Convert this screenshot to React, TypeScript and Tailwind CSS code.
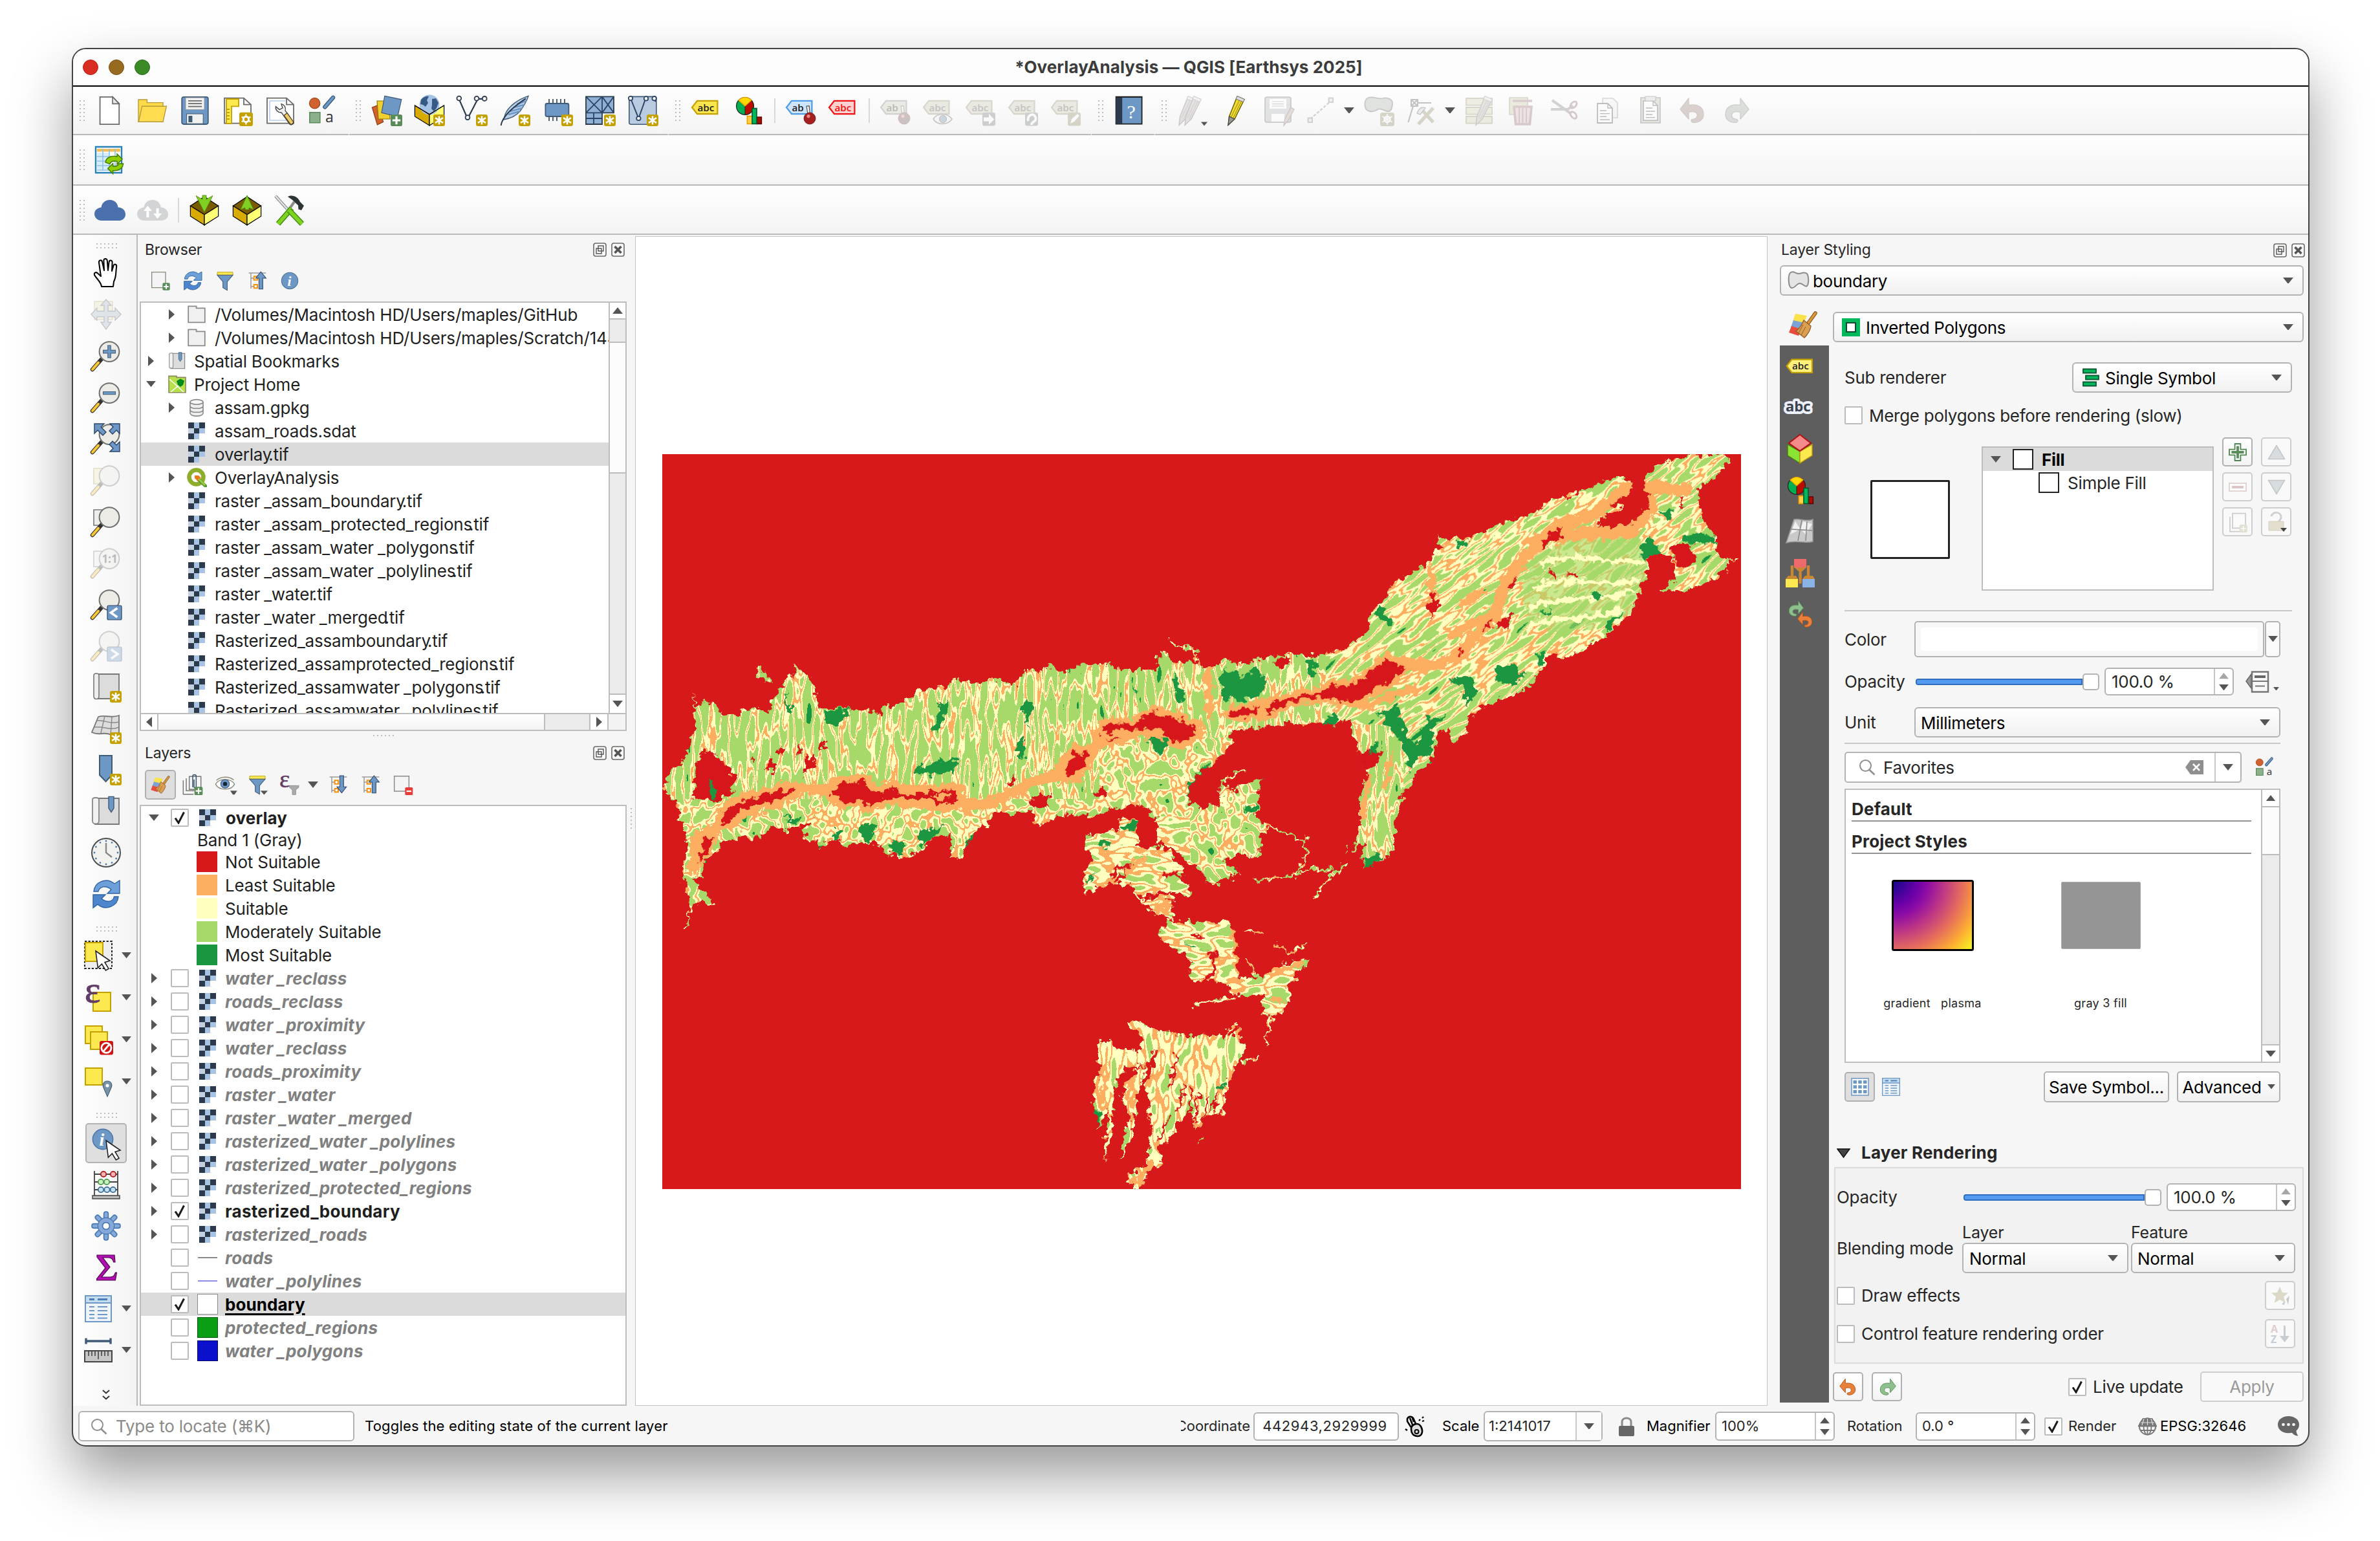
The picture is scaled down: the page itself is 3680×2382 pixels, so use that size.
import React from "react";

/* ------------------------------------------------------------------ */
/* Icon primitives (24-unit grid)                                      */
/* ------------------------------------------------------------------ */

function Ic({ s = 48, dim, children }: { s?: number; dim?: boolean; children: React.ReactNode }) {
  return (
    <svg width={s} height={s} viewBox="0 0 24 24" fill="none" className={dim ? "shrink-0 overflow-visible opacity-30" : "shrink-0 overflow-visible"}>
      {children}
    </svg>
  );
}

const BLUE = "#6d97c4";
const EDGE = "#415a75";

const Star = () => (
  <g>
    <rect x="15" y="15" width="9" height="9" rx="1.6" fill="#c4a000" />
    <path d="M19.5 16.3v6.4M16.5 17.6l6 3.8M16.5 21.4l6-3.8" stroke="#fff" strokeWidth="1.3" />
    <circle cx="19.5" cy="19.5" r="1.1" fill="#fff" />
  </g>
);
const PlusBadge = ({ x = 15, y = 15, w = 9 }) => (
  <g>
    <rect x={x} y={y} width={w} height={w} rx="1.4" fill="#5a8c5a" />
    <path d={`M${x + w / 2} ${y + 1.4}v${w - 2.8}M${x + 1.4} ${y + w / 2}h${w - 2.8}`} stroke="#fff" strokeWidth="1.6" />
  </g>
);

const NewFile = () => <Ic><path d="M4.8 1.4h9.8l5 5.2v16H4.8z" fill="#fff" stroke="#6a6a6a" strokeWidth=".9" /><path d="M14.5 1.4v5.3h5.1z" fill="#e8e8e8" stroke="#6a6a6a" strokeWidth=".8" /></Ic>;
const OpenFolder = () => <Ic><path d="M1.5 20.6V3.5h6.700v2.300h12.300v14.700z" fill="#ffda47" stroke="#b69a3b" strokeWidth=".7" /><path d="M4.300 8.600h18.900l-2.700 12H1.700z" fill="#ffdc50" stroke="#b69a3b" strokeWidth=".7" /></Ic>;
const Floppy = () => (
  <Ic>
    <path d="M3.500 1.400h17.500a1.400 1.400 0 0 1 1.400 1.400v18.300a1.400 1.400 0 0 1-1.400 1.400H3.500a1.400 1.400 0 0 1-1.400-1.400V2.800a1.400 1.400 0 0 1 1.400-1.400z" fill={BLUE} stroke={EDGE} strokeWidth=".9" />
    <path d="M5 2h14.500v9.200H5z" fill="#f1f1ef" stroke="#8a8f94" strokeWidth=".4" />
    <path d="M7 4.400h10.600M7 6.600h10.600M7 8.800h10.600" stroke="#6b6b6b" strokeWidth=".9" />
    <path d="M5.800 14.500h12.800v7.600H5.800z" fill="#f1f1ef" stroke="#3f566d" strokeWidth=".5" />
    <path d="M7.200 16h3v5h-3z" fill={EDGE} />
  </Ic>
);
const NewLayout = () => (
  <Ic>
    <path d="M2 2.300h15l5.500 5v14.500H2z" fill="#fff" stroke="#6a6a6a" strokeWidth=".9" />
    <path d="M17 2.300v5h5.500" stroke="#6a6a6a" strokeWidth=".9" />
    <path d="M3.500 3h9.500v5.700H7.500V22H3.500z" fill="#fce94f" stroke="#c4a000" strokeWidth=".9" />
    <path d="M4 11h2M4 13.500h2M4 16h2M4 18.500h2" stroke="#c4a000" strokeWidth=".9" />
    <rect x="13.500" y="13.400" width="10.500" height="10.600" rx="1.6" fill="#c4a000" />
    <circle cx="18.700" cy="18.700" r="2.100" stroke="#fff" strokeWidth="1.500" />
    <path d="M18.700 14.800v2M18.700 20.700v2M15.300 16.800l1.700.9M20.500 19.700l1.700.9M15.300 20.600l1.700-.9M20.500 17.700l1.700-.9" stroke="#fff" strokeWidth="1.100" />
  </Ic>
);
const LayoutManager = () => (
  <Ic>
    <path d="M2 2.300h15l5.500 5v14.500H2z" fill="#fff" stroke="#6a6a6a" strokeWidth=".9" />
    <path d="M4 4.500h12M4 4.500v15h16" stroke="#b9cdf0" strokeWidth=".8" />
    <path d="M17 2.300v5h5.500" stroke="#6a6a6a" strokeWidth=".9" />
    <path d="M8.700 8.800a4 4 0 0 0 4.400 4.700l6.400 9c.8 1 3.200 0 2.800-1.500L16 12a4 4 0 0 0-3-5.200l1 3.200-2.500 1.200z" fill="#f0f0f0" stroke="#4c4c4c" strokeWidth=".7" />
    <path d="M15 15.700l2.500-1.900 4.700 6.700c.7 1.300-1.700 2.700-2.500 1.600z" fill="#e9c96b" stroke="#4c3c1c" strokeWidth=".6" />
  </Ic>
);
const StyleMgr = ({ s = 48 }: { s?: number }) => (
  <Ic s={s}>
    <circle cx="5.800" cy="6.300" r="4.100" fill="#d2622d" stroke="#a0451a" strokeWidth=".6" />
    <path d="M13.700 9.200l6.300-7.300" stroke="#39597c" strokeWidth="3.200" strokeLinecap="round" />
    <path d="M13.700 9.200l6.300-7.300" stroke={BLUE} strokeWidth="1.900" strokeLinecap="round" />
    <path d="M1.900 13.400h8v8h-8z" fill="#8caf8c" stroke="#5b8a5b" strokeWidth=".8" />
    <text x="14" y="21" fontSize="11.500" fill="#333" className="font-['Open_Sans']">a</text>
  </Ic>
);
const DataSource = () => (
  <Ic>
    <path d="M.7 9.500l4.800-1.800 3.800 13-4.600 2.300z" fill="#d2622d" stroke="#8a3c14" strokeWidth=".6" />
    <path d="M4.500 4.500h9l1 14h-9z" fill="#f0cf2e" stroke="#8a7500" strokeWidth=".6" />
    <path d="M10.400.700l13 2.700-3 13.200-12.400-2.900z" fill={BLUE} stroke={EDGE} strokeWidth=".6" />
    <PlusBadge />
  </Ic>
);
const Box = ({ front = "#d9aa00", side = "#ffff75" }) => (
  <>
    <path d="M1.200 8.600L12 1.500l10.800 7.100L12 15.400z" fill="#7a5c00" stroke="#000" strokeWidth=".6" />
    <path d="M1.200 8.600L12 15.400v8L1.200 16.600z" fill={front} stroke="#000" strokeWidth=".6" />
    <path d="M22.800 8.600L12 15.400v8l10.800-6.800z" fill={side} stroke="#000" strokeWidth=".6" />
  </>
);
const GeoPackage = () => (
  <Ic>
    <path d="M.700 8L12 14.700v8.800L.700 16.500z" fill="#d9aa00" stroke="#000" strokeWidth=".6" />
    <path d="M23.300 8L12 14.700v8.800l11.300-7z" fill="#ffff75" stroke="#000" strokeWidth=".6" />
    <circle cx="12" cy="7.500" r="7.700" fill="#a5c3e4" />
    <path d="M5.500 3.500c2-2.500 5-3 6-2.500l-1.500 3 1 2-2 3-2-1.500-2-.5zM14 3l3-.5 2 3.500-1.500 4-2 2.500-2-2 .5-3z" fill="#365a85" />
    <path d="M.700 8L12 14.700 23.300 8 12 15.200z" fill="#d9aa00" stroke="#000" strokeWidth=".5" />
    <Star />
  </Ic>
);
const Shapefile = () => (
  <Ic>
    <path d="M1.700 2.700L8.500 18.200 16.500 2.800l4 .1" stroke="#2b3b4d" strokeWidth="1.100" />
    {[[1.900, 2.500], [8.500, 17.300], [15.500, 2.600], [21.600, 2.700]].map(([x, y]) => <circle key={x} cx={x} cy={y} r="1.700" fill="#fff" stroke="#2b3b4d" strokeWidth=".9" />)}
    <Star />
  </Ic>
);
const Feather = () => (
  <Ic>
    <path d="M22.500.700C14 3.500 7 9 4.700 14.500L3.300 19C9 18 13 16 16 12.500c3-4 5-7 6.500-11.800z" fill="#b7cfe8" stroke={EDGE} strokeWidth=".7" />
    <path d="M7 15l9-2.500M8.500 12.500l9.500-2.500M11 9.500l8.500-2M13.500 7l7.500-2.500" stroke={BLUE} strokeWidth="1.200" />
    <path d="M1.300 23.500C2 18 8 11 20.500 2.700" stroke="#2b3b4d" strokeWidth="1" />
    <Star />
  </Ic>
);
const Chip = () => (
  <Ic>
    <path d="M5.500 3v4M8.500 3v4M11.500 3v4M14.500 3v4M17.500 3v4M5.500 16v4M8.500 16v4M11.500 16v4" stroke="#2b3b4d" strokeWidth=".8" />
    <rect x="2.700" y="6.500" width="18" height="10" rx="1.200" fill={BLUE} stroke={EDGE} strokeWidth=".9" />
    <Star />
  </Ic>
);
const MeshNew = () => (
  <Ic>
    <path d="M1 1.200h21.500v12.500H13.500V22.500H1z" fill="#8fb0d4" stroke="#2b3b4d" strokeWidth=".9" />
    <path d="M1 13.700h12.500M13.500 1.200v12.500M1 1.200l12.500 12.500M13.500 1.200L1 13.700M13.500 1.200l9 12.500M22.500 1.200l-9 12.500M7 13.700v8.800M1 18h12.500" stroke="#2b4468" strokeWidth=".9" />
    <Star />
  </Ic>
);
const GpxNew = () => (
  <Ic>
    <rect x="1.400" y="1.200" width="21" height="21.400" rx="1.500" fill="#b9cbe0" stroke={EDGE} strokeWidth=".8" />
    <path d="M2.500 2.500L8.700 18 14 3M20 3l2 2" stroke="#2b4468" strokeWidth="1" />
    {[[2.500, 2.500], [8.700, 18], [14.500, 2.700], [20.800, 2.600]].map(([x, y]) => <circle key={x} cx={x} cy={y} r="1.600" fill="#fff" stroke="#2b4468" strokeWidth=".9" />)}
    <Star />
  </Ic>
);
const Tag = ({ fill, stroke, color, word = "abc" }: { fill: string; stroke: string; color: string; word?: string }) => (
  <>
    <path d="M5 4.400h15.700v10.200H5L1 9.500z" fill={fill} stroke={stroke} strokeWidth="1.100" />
    <text x="5.200" y="12.300" fontSize="7.600" fontWeight="600" fill={color} className="font-['Open_Sans']">{word}</text>
  </>
);
const ChartIcon = () => (
  <Ic>
    <circle cx="9" cy="8.500" r="6.700" fill="#00b050" stroke="#222" strokeWidth=".6" />
    <path d="M9 8.500V15.200a6.700 6.700 0 0 0 5-11z" fill="#bb0c00" stroke="#222" strokeWidth=".5" />
    <path d="M9 8.500L4 4a6.700 6.700 0 0 1 10 0z" fill="#ffd800" stroke="#f39c00" strokeWidth=".6" />
    <path d="M10.700 16.300h3.800v5.900h-3.800z" fill="#ffd24a" stroke="#f39c00" strokeWidth=".8" />
    <path d="M18.200 17h3.500v5.200h-3.500z" fill="#a80f00" stroke="#650000" strokeWidth=".8" />
    <path d="M14.500 10.300H18v11.900h-3.500z" fill="#00b85c" stroke="#005a2c" strokeWidth=".8" />
  </Ic>
);
const PinLabel = ({ dim }: { dim?: boolean }) => (
  <Ic dim={dim}>
    <Tag fill={dim ? "#c8c8b4" : "#cfe4ff"} stroke={dim ? "#777" : "#4d9ae8"} color="#222" word="ab" />
    <path d="M16.500 8.500l1.200 7.500 1.600-.2-.7-7.500z" fill="#eee" stroke="#555" strokeWidth=".6" />
    <circle cx="19" cy="18" r="4.500" fill={dim ? "#6b4a4a" : "#a52020"} stroke="#611" strokeWidth=".4" />
    <circle cx="18" cy="16.300" r="1.300" fill="#e88" />
  </Ic>
);
const DimLabel = ({ kind }: { kind: number }) => (
  <Ic dim>
    <Tag fill="#c8c4a8" stroke="#8a8568" color="#444" />
    {kind === 0 && <><path d="M8.500 18.500c3-5 11-5 14.500 0-3.500 5-11.500 5-14.500 0z" fill="#eee" stroke="#555" strokeWidth=".8" /><circle cx="16" cy="18.500" r="2.800" fill="#6d86a0" stroke="#333" strokeWidth=".5" /></>}
    {kind === 1 && <><rect x="13.500" y="13.500" width="10" height="10.300" rx="1.500" fill="#6c7074" /><path d="M14.500 17.200h4v-2.700l4.200 4.200-4.200 4.200v-2.700h-4z" fill="#fff" /></>}
    {kind === 2 && <><rect x="13.500" y="13.500" width="10" height="10.300" rx="1.500" fill="#6c7074" /><path d="M16 20c-1.500-4 4-7 5.500-3s-3 3-3 6" stroke="#fff" strokeWidth="1.900" /></>}
    {kind === 3 && <><rect x="13.500" y="13.500" width="10" height="10.300" rx="1.500" fill="#8a865c" /><path d="M15.500 22l1-3.500 4.500-4 1.500 1.500-4 4.500z" fill="#fff" /></>}
  </Ic>
);
const HelpBook = () => (
  <Ic>
    <path d="M1.800 1.300h20v21H1.800z" fill={BLUE} stroke="#222" strokeWidth=".9" />
    <path d="M1.800 1.300h4.800v21H1.800z" fill="#2b3b4d" />
    <path d="M2 1.500h19.800" stroke="#222" strokeWidth="1.100" />
    <text x="10.200" y="18" fontSize="15" fill="#fff" className="font-['Liberation_Serif']">?</text>
  </Ic>
);
const PencilShape = ({ fill = "#f2dc2f", dx = 0 }) => (
  <g transform={`translate(${dx} 0)`}>
    <path d="M14.500 1l5.500 2.300-7.500 15.200-5 4.700.8-6.700z" fill={fill} stroke="#6b5d00" strokeWidth=".7" />
    <path d="M17 2.200L9.500 17.500M18.500 3L11 18.500" stroke="#a89a20" strokeWidth=".6" />
    <path d="M14.500.800l5.700 2.500-1 2-5.700-2.300z" fill="#ddd" stroke="#777" strokeWidth=".5" />
    <path d="M8.300 16.500l4.200 2-5 4.700z" fill="#9a9a9a" stroke="#444" strokeWidth=".6" />
  </g>
);
const GrayPencil = ({ dx = 0 }) => (
  <g transform={`translate(${dx} 0)`}>
    <path d="M14.500 1l5.500 2.300-7.500 15.200-5 4.700.8-6.700z" fill="#bdb0ac" stroke="#666" strokeWidth=".7" />
    <path d="M17 2.200L9.500 17.500M18.500 3L11 18.500" stroke="#8a8080" strokeWidth=".6" />
    <path d="M14.500.800l5.700 2.500-1 2-5.700-2.300z" fill="#ddd" stroke="#777" strokeWidth=".5" />
  </g>
);
const Pencil = () => <Ic><PencilShape dx={-1} /></Ic>;
const Pencils = () => (
  <Ic><g opacity=".32"><GrayPencil dx={-6} /><GrayPencil dx={-1.5} /></g><path d="M18.500 20.800h5l-2.500 3z" fill="#555" /></Ic>
);
const SaveEdits = () => (
  <Ic dim>
    <rect x="2" y="1.500" width="20" height="19.500" rx="1.500" fill="#a8aeb4" stroke="#555" strokeWidth=".8" />
    <path d="M5.500 3h13v7.500h-13zM7 14.500h10v6H7z" fill="#fff" />
    <path d="M7.500 5h9M7.500 6.800h9M7.500 8.500h9" stroke="#777" strokeWidth=".6" />
    <path d="M22 9.500l2.500 1.500-4.500 8.500-3.500 4 .8-5z" fill="#b99a90" stroke="#555" strokeWidth=".6" />
  </Ic>
);
const DigitLine = () => <Ic dim><path d="M4 18.500L19.500 5" stroke="#777" strokeWidth="1.100" strokeDasharray="2.200 1.200" /><path d="M2.300 17.800h3.200v3.200H2.300zM18.300 2.300h3.200v3.200h-3.200z" fill="#ddd" stroke="#777" strokeWidth="1" /></Ic>;
const AddPolygon = () => (
  <Ic dim>
    <path d="M3 2.500C7 0 11 3.500 15 2.500s8 1 7.500 4.500-1 6-4 5.500-5-3-8-1S2 13 1.400 9 1.500 3.500 3 2.500z" fill="#a5aca5" stroke="#555" strokeWidth=".9" />
    <rect x="13" y="13.500" width="11" height="10.500" rx="1.800" fill="#8a865c" /><circle cx="18.500" cy="18.700" r="2.200" stroke="#fff" strokeWidth="1.300" /><path d="M18.500 14.500v8.400M14.700 16.500l7.600 4.400M14.700 20.900l7.600-4.400" stroke="#fff" strokeWidth=".8" />
  </Ic>
);
const VertexTool = () => (
  <Ic dim>
    <path d="M4 3.500h5v5H4zM4.500 4l4 4M8.500 4l-4 4M9 6h10.500M5.500 8.500L1.700 21" stroke="#444" strokeWidth="1" />
    <path d="M11 10l10 11M21 10L9.500 22.500" stroke="#8a865c" strokeWidth="2.600" /><path d="M8.500 14c2-5 5-5 6.500-4l-4 5z" fill="#ccc" stroke="#555" strokeWidth=".7" />
  </Ic>
);
const MultiEdit = () => (
  <Ic dim>
    {[2.500, 9.500, 16.500].map((y) => <path key={y} d={`M1.500 ${y}h20v5.300h-20z`} fill="#d4d0ac" stroke="#8a865c" strokeWidth=".9" />)}
    <GrayPencil dx={1.5} />
  </Ic>
);
const Trash = () => (
  <Ic dim><path d="M2 2h14v13H2z" fill="#c8c4a0" stroke="#8a865c" strokeWidth=".8" /><path d="M4.500 4.500h15M5.500 9h13.500l-1.300 13.500H6.800z" stroke="#90606a" strokeWidth="1.800" fill="#d4b4b8" /><path d="M9.500 10v11.500M12.200 10v11.500M15 10v11.500" stroke="#90606a" strokeWidth="1" /></Ic>
);
const Cut = () => <Ic dim><path d="M2 4l14 10M1 11h13l4-3" stroke="#777" strokeWidth="2" /><ellipse cx="18.500" cy="7.500" rx="3" ry="1.900" transform="rotate(-45 18.500 7.500)" stroke="#805a60" strokeWidth="1.400" /><ellipse cx="18.500" cy="15.500" rx="3" ry="1.900" transform="rotate(50 18.500 15.500)" stroke="#805a60" strokeWidth="1.400" /></Ic>;
const Copy = () => <Ic dim><path d="M8 2.500h8l3.500 3.500v11.500H8z" fill="#eee" stroke="#888" strokeWidth=".8" /><path d="M4 6.500h8l3.500 3.500v11.500H4z" fill="#fff" stroke="#333" strokeWidth=".9" /><path d="M12 6.500V10h3.500M6 12h5M6 14.300h7.500M6 16.600h5M6 19h7.500" stroke="#333" strokeWidth=".7" /></Ic>;
const Paste = () => <Ic dim><path d="M4.500 2h15v19.500h-15z" fill="#bbb8a8" stroke="#555" strokeWidth=".8" /><path d="M6.500 4.500h7.500l3.500 3.500v11.500h-11z" fill="#fff" stroke="#333" strokeWidth=".8" /><path d="M14 4.500V8h3.500M8.500 10h5M8.500 12.500h7M8.500 15h5M8.500 17.300h7" stroke="#333" strokeWidth=".7" /><path d="M8 1h8v3.500H8z" fill="#ccc" stroke="#555" strokeWidth=".6" /></Ic>;
const ARROW_BACK = "M2 11L8.500 2.500v5.300c7.500-1.300 11.500 2 11.500 7.200 0 4-3.500 6.300-7.500 6.200-1 0-2-.6-2-1.400 0-.9.600-1.200 1.500-1.200 2.500-.2 3.500-1.800 3.200-3.600-.4-2-2.700-2.700-6.700-1.800v5.300z";
const UndoArrow = ({ s = 48, dim, flip, color, edge }: { s?: number; dim?: boolean; flip?: boolean; color: string; edge: string }) => (
  <Ic s={s} dim={dim}>
    <g transform={flip ? "translate(24 0) scale(-1 1)" : undefined}>
      <path d={ARROW_BACK} fill={color} stroke={edge} strokeWidth=".7" strokeLinejoin="round" />
    </g>
  </Ic>
);
const TableRefresh = () => (
  <Ic>
    <path d="M1.500 2h20v20H1.500z" fill="#fff" stroke="#2a80b9" strokeWidth="1.200" />
    <path d="M2.500 3.500h18v2.200h-18z" fill="#f5bd55" />
    <path d="M2.500 6.500h10v13h-10z" fill="#d5ecf9" />
    <path d="M2.500 9.500h18M2.500 13h18M2.500 16.500h18M2.500 20h18M7 3.500v17M12 3.500v17M16.500 3.500v17" stroke="#90c0e2" strokeWidth=".8" />
    <path d="M9 14c.5-4 5-5.500 9-4.500V7.500l4 4-4 4v-2.300c-3-.5-5 .300-5.500 2z" fill="#8fce00" stroke="#3f7c00" strokeWidth=".7" />
    <path d="M22.800 15c-.5 4-4 5.800-8 5.300v2.500l-4-4 4-4v2.200c2.500.5 4.300-.700 4.500-2z" fill="#8fce00" stroke="#3f7c00" strokeWidth=".7" />
  </Ic>
);
const CloudShape = ({ color, children }: { color: string; children?: React.ReactNode }) => (
  <Ic><path d="M12 4c3.500 0 6 2.500 6.300 5.800C21.800 10 24 12.200 24 15.200S21.500 20 18.500 20h-13C2.500 20 0 17.800 0 14.900c0-2.800 2-4.800 5.300-5.200C5.700 6.300 8.500 4 12 4z" fill={color} />{children}</Ic>
);
const BoxDown = () => <Ic><Box /><path d="M5.500.800l5 2.800V.500h3v3.100l5-2.800L12 13.500z" fill="#7fd022" stroke="#4c8a10" strokeWidth=".4" /></Ic>;
const BoxUp = () => <Ic><Box /><path d="M12 .500l5 11L13.500 10v1.500h-3V10L7 11.500z" fill="#7fd022" stroke="#4c8a10" strokeWidth=".4" /></Ic>;
const ToolsIcon = () => (
  <Ic>
    <path d="M1 1l9 10" stroke="#8a8a8a" strokeWidth="2.400" /><path d="M1 1l9 10" stroke="#e6e6e6" strokeWidth="1.200" />
    <path d="M15.500 5.500L11 12" stroke="#8a8a8a" strokeWidth="2" />
    <path d="M10.500 1.500c4-2 8 .500 9.500 4l3 3-2 3.500-2.300-.8-.2-3-4.500-4.200c-1-1-2.500-1.500-3.500-2.500z" fill="#2d3436" />
    <path d="M13.500 10.500L3 22.500" stroke="#3d8a0e" strokeWidth="4.200" /><path d="M13.500 10.500L3 22.500" stroke="#7ed321" strokeWidth="2.800" />
    <path d="M11.500 12l10 10.500" stroke="#3d8a0e" strokeWidth="4.200" /><path d="M11.500 12l10 10.500" stroke="#7ed321" strokeWidth="2.800" />
  </Ic>
);

/* Left map tools */
const Hand = () => <Ic><path d="M8.500 22.500c-.5-4-4-6-5.500-9-.5-1.500 1-2.500 2.300-1.500L8 14.500 6.500 4c-.3-2 2-2.500 2.500-.7L10.500 10l-.3-7.500c0-2 2.500-2 2.700 0l.6 7.500.8-6.500c.3-1.800 2.500-1.500 2.500.3l-.3 6.700 1.300-4.300c.5-1.500 2.500-1 2.300.7-.8 5 0 8-2.100 11.600l-.5 4z" fill="#fff" stroke="#000" strokeWidth="1" strokeLinejoin="round" /></Ic>;
const PanSel = () => <Ic dim><path d="M3 2h14v14H3z" fill="#eae2b8" stroke="#b3aa70" strokeWidth=".7" /><path d="M12 .500l4 4.500h-2.500v4.500H19V7l4.500 5-4.500 4.500v-2.700h-5.500V18H16l-4 5.500L8 18h2.500v-4.200H5v2.700L.500 12 5 7v2.500h5.500V5H8z" fill="#a6b7c8" stroke="#556" strokeWidth=".7" /></Ic>;
const Lens = ({ children, back }: { children?: React.ReactNode; back?: React.ReactNode }) => (
  <>
    {back}
    <path d="M9 14L1.500 22.500" stroke="#333" strokeWidth="3.200" strokeLinecap="round" />
    <path d="M6 17.300L1.500 22.500" stroke="#fac832" strokeWidth="2" strokeLinecap="round" />
    <circle cx="14.500" cy="8.800" r="7.700" fill="#ecebe6" stroke="#6f7070" strokeWidth="1" />
    {children}
  </>
);
const LensBack = <path d="M2.500 3h12v12h-12z" fill="#eee" stroke="#777" strokeWidth=".8" />;
const FullExtent = () => <Ic><Lens /><path d="M3 .500h7.500L8 3l4 4-2.500 2.500-4-4L3 8zM22.500.500H15L17.500 3l-3 3L17 8.500l3-3L22.500 8zM22.500 22H15l2.500-2.500-3-3L17 14l3 3 2.500-2.500z" fill={BLUE} stroke="#2b4468" strokeWidth=".7" /></Ic>;
const NavBox = ({ d }: { d: string }) => <><rect x="13" y="13" width="11" height="11" rx="1" fill={BLUE} stroke="#2b4468" strokeWidth=".6" /><path d={d} stroke="#fff" strokeWidth="1.800" /></>;
const Scroll = ({ children }: { children?: React.ReactNode }) => <Ic><path d="M5 2h17v19H3.500z" fill="#dcdcdc" stroke="#777" strokeWidth=".9" /><path d="M2.500 3c0-2 4-2 4 0v16c0 3-4 3-4 0z" fill="#eee" stroke="#777" strokeWidth=".8" />{children}</Ic>;
const Mesh3D = () => <Ic><path d="M6 3c5-2 9 1.500 16-1v14l-6 1c-6-3-9 1-15-2z" fill="#dcdcdc" stroke="#777" strokeWidth=".9" /><path d="M4.500 6c7-1 9 3 17.500 1M3 11c7-1 12 3 19 0M11 2.500l-3 13M16.500 3l-1 14" stroke="#888" strokeWidth=".7" /><Star /></Ic>;
const NewBookmark = () => <Ic><path d="M7 1h9.500v15l-4.700 5L7 16z" fill={BLUE} stroke={EDGE} strokeWidth="1" /><Star /></Ic>;
const Clock = () => (
  <Ic>
    <circle cx="12" cy="12" r="11" fill="#f2f2ee" stroke="#4c4f52" strokeWidth="1" />
    {[0, 30, 60, 90, 120, 150, 180, 210, 240, 270, 300, 330].map((a) => <circle key={a} cx="12" cy="3" r=".7" fill="#4d80b8" transform={`rotate(${a} 12 12)`} />)}
    <path d="M12 4.500V12l4.500 3.500" stroke="#888" strokeWidth="1.200" />
  </Ic>
);
const Refresh = ({ s = 48 }: { s?: number }) => (
  <Ic s={s}>
    <path d="M2.500 10C3 3 12-1.500 18.500 4L22.500 1.500v10h-9.500l3-3C12 5 7 6 6 10z" fill="#6d9fd8" stroke="#2f64a3" strokeWidth=".7" />
    <path d="M21.500 14c-.5 7-9.500 11.500-16 6l-3.500 2.700V12.500h9.500l-3 3c4 3.500 9 2.500 9.700-1.500z" fill="#4d86cc" stroke="#2f64a3" strokeWidth=".7" />
  </Ic>
);
const Cursor = ({ x, y }: { x: number; y: number }) => <path transform={`translate(${x} ${y})`} d="M0 0l11 7.500-4 1.200 3 5-2.300 1.300-3-5-3 3z" fill="#fff" stroke="#222" strokeWidth=".8" />;
const SelectIcon = () => <Ic><path d="M1.500 1h21v21h-21z" fill="#eee" stroke="#222" strokeWidth="1" strokeDasharray="1.600 1.200" /><path d="M2 2h13.500v14.500H2z" fill="#fce94f" stroke="#c4a000" strokeWidth="1" /><Cursor x={10} y={8.500} /></Ic>;
const SelectExpr = () => <Ic><path d="M8 8h13.500v14.500H8z" fill="#fce94f" stroke="#c4a000" strokeWidth="1" /><text x="1.500" y="15.500" fontSize="29" fill="#613d66" stroke="#613d66" strokeWidth=".5" className="font-['Liberation_Serif']">ε</text></Ic>;
const Deselect = () => <Ic><path d="M2 1.500h13v13.500H2z" fill="#fce94f" stroke="#c4a000" strokeWidth="1" /><path d="M6 6h13v13.500H6z" fill="#fce94f" stroke="#c4a000" strokeWidth="1" /><rect x="13" y="13" width="10.500" height="10.800" rx="1.500" fill="#cf1515" /><circle cx="18.200" cy="18.400" r="3.800" stroke="#fff" strokeWidth="1.400" /><path d="M15.700 21.300l5-5.800" stroke="#fff" strokeWidth="1.400" /></Ic>;
const SelectPin = () => <Ic><path d="M2 1.500h13v13H2z" fill="#fce94f" stroke="#c4a000" strokeWidth="1" /><path d="M19 11.500c3 0 4.200 3 2.800 5.500L19 23.500 16.200 17c-1.400-2.500-.2-5.500 2.800-5.500z" fill="#7893a8" stroke="#46637a" strokeWidth=".6" /><circle cx="19" cy="15" r="1.300" fill="#fff" /></Ic>;
const Identify = () => <Ic><circle cx="9.500" cy="9" r="7.800" fill={BLUE} stroke="#4c78a8" strokeWidth=".8" /><text x="6.700" y="14" fontSize="14" fontWeight="700" fontStyle="italic" fill="#fff" className="font-['Liberation_Serif']">i</text><Cursor x={12} y={10} /></Ic>;
const Abacus = () => (
  <Ic>
    <path d="M3 1.500v20M21 1.500v20M3 4h18M3 10h18M3 16h18" stroke="#444" strokeWidth=".9" /><path d="M1.500 20.500h21v2.500h-21z" fill="#bbb" stroke="#444" strokeWidth=".7" />
    {[10, 17.500].map((x) => <circle key={x} cx={x} cy="4" r="2.100" fill="#f6b5b5" stroke="#b31515" strokeWidth=".9" />)}
    {[8, 12.500].map((x) => <circle key={x} cx={x} cy="10" r="2.100" fill="#c9f0c0" stroke="#4c9a4c" strokeWidth=".9" />)}
    {[8, 12.700, 17.400].map((x) => <circle key={x} cx={x} cy="16" r="2.100" fill="#c5e2f5" stroke="#3c6c94" strokeWidth=".9" />)}
  </Ic>
);
const Gear = () => (
  <Ic>
    {[0, 45, 90, 135, 180, 225, 270, 315].map((a) => <rect key={a} x="10.300" y="1" width="3.400" height="7" rx="1.600" fill="#85a8d6" stroke="#4376b5" strokeWidth=".8" transform={`rotate(${a} 12 12)`} />)}
    <circle cx="12" cy="12" r="6.300" fill="#85a8d6" stroke="#4376b5" strokeWidth=".6" /><circle cx="12" cy="12" r="2.700" fill="#fff" stroke="#4376b5" strokeWidth=".8" />
  </Ic>
);
const Sigma = () => <Ic><path d="M5 2.500h13.500l.5 5.500h-1.200c-.5-2.500-1.500-3.500-4-3.500H9.500l5.500 7.300L8.500 19.500H15c2.500 0 3.500-1 4.200-3.500h1l-1 6H4.800v-1.200l6.700-8.300L5 4z" fill="#b10fb1" stroke="#4e074e" strokeWidth=".6" /></Ic>;
const TableIcon = ({ s = 48 }: { s?: number }) => <Ic s={s}><path d="M2 2h20v20H2z" fill="#eef4fa" stroke={BLUE} strokeWidth="1" /><path d="M2 2h20v5.500H2z" fill="#c4dcf0" stroke={BLUE} strokeWidth="1" /><path d="M5 4.800h4M11.500 4.800H19" stroke="#4c80b8" strokeWidth="1.500" /><path d="M5 10.500h4M11.500 10.500H19M5 13.500h4M11.500 13.500H19M5 16.500h4M11.500 16.500H19M5 19.300h4M11.500 19.300H19" stroke={BLUE} strokeWidth="1" /></Ic>;
const RulerIcon = () => <Ic><path d="M2.500 5h19M2.500 2.800v4.500M21.500 2.800v4.500" stroke={EDGE} strokeWidth="1.700" /><path d="M1.500 12.500h21V21h-21z" fill="#c6c6c6" stroke="#444" strokeWidth="1" /><path d="M4.500 13v3.500M7 13v3.500M9.500 13v3.500M12 13v6M14.500 13v3.500M17 13v3.500M19.500 13v3.500" stroke="#444" strokeWidth=".8" /></Ic>;

/* Panel icons */
const RasterIcon = () => (
  <svg width="26" height="26" viewBox="0 0 9 9" className="shrink-0" shapeRendering="crispEdges">
    <path d="M0 0h9v6H6v3H0z" fill="#a9c4e3" /><path d="M0 0h3v3H0zM6 0h3v3H6zM3 3h3v3H3zM0 6h3v3H0z" fill="#2b3b4d" /><path d="M0 3h3v3H0z" fill="#c3d1e3" />
  </svg>
);
const FolderIcon = () => <svg width="28" height="28" viewBox="0 0 14 14" className="shrink-0"><path d="M.600.700h6.200v1.500h6.600v11H.600z" fill="#f0f0f0" stroke="#8a8a8a" strokeWidth=".9" /></svg>;
const BookmarksIcon = ({ s = 28 }: { s?: number }) => <Ic s={s}><path d="M5 2h17v20H3.500z" fill="#dcdcdc" stroke="#777" strokeWidth=".9" /><path d="M1.500 3c0-2 5-2 5 0v16.500c0 3-5 3-5 0z" fill="#f2f2f2" stroke="#888" strokeWidth=".9" /><path d="M14 .700h4v9l-2 3-2-3z" fill={BLUE} stroke={EDGE} strokeWidth=".7" /></Ic>;
const HomeIcon = () => <svg width="28" height="28" viewBox="0 0 14 14" className="shrink-0"><path d="M.500.700h6v1h7v11.700H.500z" fill="#b6e04c" stroke="#8a8a5a" strokeWidth=".8" /><path d="M1 3l11 10M8 8l-6 5" stroke="#fff" strokeWidth=".8" /><path d="M6.500 4.500l3-1.800 3 1.500-1 3.300L9.500 9 7.500 7.500z" fill="#008a1c" /></svg>;
const DbIcon = () => <svg width="28" height="28" viewBox="0 0 14 14" className="shrink-0"><path d="M2 2.700v8.600c0 3 10 3 10 0V2.700" fill="#eee" stroke="#8a8a8a" strokeWidth=".8" /><ellipse cx="7" cy="2.700" rx="5" ry="1.900" fill="#f6f6f6" stroke="#8a8a8a" strokeWidth=".8" /><path d="M2 5.700c0 2.600 10 2.600 10 0M2 8.700c0 2.600 10 2.600 10 0" stroke="#8a8a8a" strokeWidth=".8" fill="none" /></svg>;
const QgisIcon = () => <svg width="31" height="30" viewBox="0 0 31 30" className="shrink-0"><circle cx="14.500" cy="14.500" r="11" fill="#fff" stroke="#8dad2b" strokeWidth="6.500" /><path d="M15 15l4 0 12 12v3h-4L15 19z" fill="#589632" /><path d="M12 12h6l4 4-5 5-5-5z" fill="#ee7913" /><path d="M18 17l10 10" stroke="#9ccc3c" strokeWidth="3" /></svg>;

const AddLayer = () => <Ic s={32}><path d="M2 2h16v18H2z" fill="#f4f4f4" stroke="#8a8a7a" strokeWidth="1" /><PlusBadge x={14.5} y={14.5} w={8.5} /></Ic>;
const Funnel = ({ arrow }: { arrow?: boolean }) => <Ic s={32}><path d="M3 2h18v3.500H3z" fill="#fce94f" stroke="#b8a31b" strokeWidth=".7" /><path d="M3 5.500h18L14.500 13v10L9.500 20V13z" fill={BLUE} stroke={EDGE} strokeWidth=".8" />{arrow && <path d="M15.500 19h8.500l-4.200 4.700z" fill="#555" />}</Ic>;
const TreeArrow = ({ down }: { down?: boolean }) => (
  <Ic s={32}>
    <path d="M2 3h20M4.500 3v18M4.500 9h4M4.500 18.500h4" stroke="#999" strokeWidth="1.100" /><path d="M8 7h4v4H8zM8 16.500h4v4H8z" fill="#fff" stroke="#f5910c" strokeWidth="1.500" />
    {down ? <path d="M13.800 1.500h4.400v13H21.500L16 21.500l-5.500-7h3.300z" fill={BLUE} stroke="#2b4468" strokeWidth=".8" /> : <path d="M13.800 21.500h4.400V9H22L16 1.500 10 9h3.800z" fill={BLUE} stroke="#2b4468" strokeWidth=".8" />}
  </Ic>
);
const InfoIcon = () => <Ic s={32}><circle cx="12" cy="12" r="9.500" fill={BLUE} stroke="#4c6f96" strokeWidth=".8" /><text x="9.300" y="18" fontSize="16" fontWeight="700" fontStyle="italic" fill="#fff" className="font-['Liberation_Serif']">i</text></Ic>;
const BrushIcon = ({ s = 48 }: { s?: number }) => (
  <Ic s={s}>
    <path d="M6 3.500l9 1.500-3 7-8-2.500z" fill="#fbe24a" /><path d="M4.500 8.500l8.500 2-3 5-7.500-1.500z" fill="#7da3d6" /><path d="M3 13l8 2.500-2.500 5-7.500-2.500z" fill="#e94b3c" />
    <path d="M15 12l6.500-9" stroke="#8a5a1c" strokeWidth="2.800" strokeLinecap="round" /><path d="M15 12l6.500-9" stroke="#d9963c" strokeWidth="1.700" strokeLinecap="round" />
    <path d="M12.500 8.500l5.500 4.500c-.5 4-3 7-5 9L6.500 17c2.500-2 4.500-4.500 6-8.500z" fill="#dc9f52" stroke="#96622a" strokeWidth=".7" />
    <path d="M12 12l-3.500 6.500M14 13.500L10.500 20" stroke="#96622a" strokeWidth=".5" />
  </Ic>
);
const AddGroup = () => <Ic s={32}><path d="M1 7v16h12M4.500 4.500V19H14M8 2.500h13.500v15H8z" stroke="#777" strokeWidth="1.100" /><path d="M12 15V2c0-2 4-2 4 0v12c0 2-2.500 2-2.500 0V6" stroke={EDGE} strokeWidth="1.200" /><PlusBadge x={14} y={14.5} w={9.5} /></Ic>;
const EyeIcon = () => <Ic s={32}><path d="M1 11.500C5 4 19 4 23 11.500 19 19 5 19 1 11.500z" fill="#fff" stroke="#8a8a7a" strokeWidth="1" /><path d="M2 7C7 2 17 2 22 6.500" stroke="#8a8a7a" strokeWidth="1" /><circle cx="12" cy="11" r="5" fill={BLUE} stroke="#3c5a7c" strokeWidth=".8" /><circle cx="12" cy="11" r="2.400" fill="#16233a" /><path d="M18 19h8l-3 4.500h-2z" fill="#555" /></Ic>;
const EpsFilter = () => <Ic s={32}><text x="0" y="15" fontSize="29" fill="#613d66" stroke="#613d66" strokeWidth=".4" className="font-['Liberation_Serif']">ε</text><path d="M11.500 13h11v2L19 18v5.500h-4V18l-3.500-3z" fill="#aaa" stroke="#888" strokeWidth=".6" /></Ic>;
const RemoveLayer = () => <Ic s={32}><path d="M2 2h17v17.500H2z" fill="#f4f4f4" stroke="#8a8a8a" strokeWidth="1.100" /><rect x="14.500" y="15" width="9" height="9" rx="1.400" fill="#e63c3c" /><path d="M16.200 19.500h5.600" stroke="#fff" strokeWidth="1.700" /></Ic>;

function DockButtons() {
  return (
    <div className="flex gap-[7px]">
      <svg width="21" height="22" viewBox="0 0 21 22"><rect x="1" y="1" width="19" height="20" rx="3" fill="#f8f8f8" stroke="#6a6a64" strokeWidth="1.600" /><path d="M8 5h8v8h-8zM5 9h8v8H5z" fill="#fff" stroke="#555" strokeWidth="1.400" /></svg>
      <svg width="21" height="22" viewBox="0 0 21 22"><rect x="1" y="1" width="19" height="20" rx="3" fill="#f8f8f8" stroke="#6a6a64" strokeWidth="1.600" /><path d="M5.500 6l10 10M15.500 6l-10 10" stroke="#555" strokeWidth="3.600" /></svg>
    </div>
  );
}

const Down = ({ w = 16, color = "#555" }: { w?: number; color?: string }) => <svg width={w} height={w * 0.62} viewBox="0 0 16 10" className="shrink-0"><path d="M0 0h16L8 10z" fill={color} /></svg>;
const Up = ({ w = 16, color = "#555" }: { w?: number; color?: string }) => <svg width={w} height={w * 0.62} viewBox="0 0 16 10" className="shrink-0"><path d="M0 10h16L8 0z" fill={color} /></svg>;
const Right = () => <svg width="9" height="16" viewBox="0 0 9 16" className="shrink-0"><path d="M0 0v16l9-8z" fill="#555" /></svg>;
const Left = () => <svg width="9" height="16" viewBox="0 0 9 16" className="shrink-0"><path d="M9 0v16L0 8z" fill="#555" /></svg>;

/* ------------------------------------------------------------------ */
/* Toolbars                                                            */
/* ------------------------------------------------------------------ */

const VHandle = () => (
  <div className="grid w-[8px] shrink-0 grid-cols-[2px_2px] gap-x-[4px] gap-y-[4px]">
    {Array.from({ length: 12 }, (_, i) => <span key={i} className="h-[2px] w-[2px] bg-[#bdbdbd]" />)}
  </div>
);
const HHandle = () => (
  <div className="grid h-[8px] w-[32px] shrink-0 grid-cols-[repeat(6,2px)] gap-x-[4px] gap-y-[4px]">
    {Array.from({ length: 12 }, (_, i) => <span key={i} className="h-[2px] w-[2px] bg-[#bdbdbd]" />)}
  </div>
);
const Sep = () => <div className="mx-[-3px] h-[38px] w-[2px] shrink-0 bg-[#d8d8d8]" />;

function Segment({ children, last }: { children: React.ReactNode; last?: boolean }) {
  return (
    <div className={last ? "flex flex-1 items-center border-b-2 border-[#b9b9b9] pl-[10px]" : "mr-px flex items-center border-b-2 border-[#b9b9b9] pr-[15px] pl-[10px]"}>
      <VHandle />
      <div className="ml-[16px] flex items-center gap-[18px]">{children}</div>
    </div>
  );
}

function Toolbars() {
  return (
    <>
      <div className="flex h-[75px] bg-gradient-to-b from-[#fefefe] to-[#f4f4f4]">
        <div className="mr-px flex items-center border-b-2 border-[#b9b9b9] pr-[16px] pl-[10px]">
          <VHandle />
          <div className="ml-[14px] flex items-center gap-[18px]">
            <NewFile /><OpenFolder /><Floppy /><NewLayout /><LayoutManager /><StyleMgr />
          </div>
        </div>
        <Segment><DataSource /><GeoPackage /><Shapefile /><Feather /><Chip /><MeshNew /><GpxNew /></Segment>
        <Segment>
          <Ic><Tag fill="#f9e64f" stroke="#c4a000" color="#222" /></Ic>
          <ChartIcon />
          <Sep />
          <PinLabel />
          <Ic><Tag fill="#ffd0d0" stroke="#ee1111" color="#ee1111" /></Ic>
          <Sep />
          <PinLabel dim /><DimLabel kind={0} /><DimLabel kind={1} /><DimLabel kind={2} /><DimLabel kind={3} />
        </Segment>
        <Segment><HelpBook /></Segment>
        <Segment last>
          <Pencils /><Pencil /><SaveEdits />
          <div className="mr-[-4px] flex items-center gap-[12px]"><DigitLine /><Down /></div>
          <AddPolygon />
          <div className="mr-[-4px] flex items-center gap-[12px]"><VertexTool /><Down /></div>
          <MultiEdit /><Trash /><Cut /><Copy /><Paste />
          <UndoArrow dim color="#94756a" edge="#766860" />
          <UndoArrow dim flip color="#98a098" edge="#6a746a" />
        </Segment>
      </div>
      <div className="flex h-[78px] items-center border-b-2 border-[#b9b9b9] bg-gradient-to-b from-[#fefefe] to-[#f4f4f4] pl-[10px]">
        <VHandle /><div className="ml-[14px]"><TableRefresh /></div>
      </div>
      <div className="flex h-[76px] items-center border-b-2 border-[#b9b9b9] bg-gradient-to-b from-[#fefefe] to-[#f4f4f4] pt-[2px] pl-[10px]">
        <VHandle />
        <div className="ml-[15px] flex items-center gap-[18px]">
          <CloudShape color="#4a70ae" />
          <CloudShape color="#d2d4d6"><path d="M8.200 17.500v-6M15.800 10.500v5" stroke="#fff" strokeWidth="2" /><path d="M5 12.500l3.200-4 3.200 4zM12.600 14.500l3.200 4 3.200-4z" fill="#fff" /></CloudShape>
          <Sep />
          <BoxDown /><BoxUp /><ToolsIcon />
        </div>
      </div>
    </>
  );
}

const Cell = ({ children }: { children: React.ReactNode }) => <div className="flex h-[64px] w-[98px] shrink-0 items-center justify-center pl-[4px]">{children}</div>;
const DropCell = ({ children, tall }: { children: React.ReactNode; tall?: boolean }) => (
  <div className={tall ? "flex h-[65px] w-[98px] shrink-0 items-center gap-[12px] pl-[15px]" : "flex h-[64px] w-[98px] shrink-0 items-center gap-[12px] pl-[15px]"}>{children}<Down w={15} /></div>
);

function MapTools() {
  return (
    <div className="flex w-[100px] shrink-0 flex-col border-r-2 border-[#b9b9b9] bg-gradient-to-r from-[#fefefe] to-[#f4f4f4] pt-[13px]">
      <div className="flex justify-center pl-[6px]"><HHandle /></div>
      <div className="mt-[6px] flex flex-col">
        <Cell><Hand /></Cell>
        <Cell><PanSel /></Cell>
        <Cell><Ic><Lens><path d="M14.500 3.800v10M9.500 8.800h10" stroke={EDGE} strokeWidth="2.800" /><path d="M14.500 4.300v9M10 8.800h9" stroke={BLUE} strokeWidth="1.800" /></Lens></Ic></Cell>
        <Cell><Ic><Lens><path d="M9.500 8.800h10" stroke={EDGE} strokeWidth="2.600" /><path d="M10 8.800h9" stroke={BLUE} strokeWidth="1.700" /></Lens></Ic></Cell>
        <Cell><FullExtent /></Cell>
        <Cell><Ic dim><Lens back={<path d="M2.500 3h12v12h-12z" fill="#f1e8b0" stroke="#a39a60" strokeWidth=".8" />} /></Ic></Cell>
        <Cell><Ic><Lens back={LensBack} /></Ic></Cell>
        <Cell><Ic dim><Lens back={LensBack}><text x="8.700" y="12" fontSize="8.500" fontWeight="700" fill="#333" className="font-['Open_Sans']">1:1</text></Lens></Ic></Cell>
        <Cell><Ic><Lens /><NavBox d="M20.700 15l-5 3.500 5 3.500" /></Ic></Cell>
        <Cell><Ic dim><Lens /><NavBox d="M16 15l5 3.500-5 3.500" /></Ic></Cell>
        <Cell><Scroll><Star /></Scroll></Cell>
        <Cell><Mesh3D /></Cell>
        <Cell><NewBookmark /></Cell>
        <Cell><BookmarksIcon s={48} /></Cell>
        <Cell><Clock /></Cell>
        <Cell><Refresh /></Cell>
      </div>
      <div className="mt-[18px] flex justify-center pl-[6px]"><HHandle /></div>
      <div className="mt-[4px] flex flex-col">
        <DropCell tall><SelectIcon /></DropCell>
        <DropCell tall><SelectExpr /></DropCell>
        <DropCell tall><Deselect /></DropCell>
        <DropCell tall><SelectPin /></DropCell>
      </div>
      <div className="mt-[16px] flex justify-center pl-[6px]"><HHandle /></div>
      <div className="mt-[7px] flex flex-col">
        <Cell><div className="flex h-[62px] w-[64px] items-center justify-center rounded-[5px] border-2 border-[#b3b3b3] bg-[#dfdfdf]"><Identify /></div></Cell>
        <Cell><Abacus /></Cell>
        <Cell><Gear /></Cell>
        <Cell><Sigma /></Cell>
        <DropCell><TableIcon /></DropCell>
        <DropCell><RulerIcon /></DropCell>
      </div>
      <div className="mt-[29px] flex justify-center pl-[4px]">
        <svg width="12" height="17" viewBox="0 0 12 17" fill="none"><path d="M1 1l5 4.500L11 1M1 10l5 4.500L11 10" stroke="#333" strokeWidth="2" /></svg>
      </div>
    </div>
  );
}

/* ------------------------------------------------------------------ */
/* Docks on the left                                                   */
/* ------------------------------------------------------------------ */

/* File and layer names: wide gap in "r_", tight kerning before the extension. */
function Name({ text }: { text: string }) {
  const parts = text.split(/(?<=r)(?=_)|(?=\.tif$)/);
  return <>{parts.map((p, i) => <span key={i} className={i === 0 ? "" : p.startsWith(".") ? "ml-[-5px]" : "ml-[6px]"}>{p}</span>)}</>;
}

type Node = { label: string; kind: "folder" | "bookmarks" | "home" | "db" | "raster" | "qgis"; level: number; open?: boolean; closed?: boolean; selected?: boolean };
const browserRows: Node[] = [
  { label: "/Volumes/Macintosh HD/Users/maples/GitHub", kind: "folder", level: 1, closed: true },
  { label: "/Volumes/Macintosh HD/Users/maples/Scratch/144", kind: "folder", level: 1, closed: true },
  { label: "Spatial Bookmarks", kind: "bookmarks", level: 0, closed: true },
  { label: "Project Home", kind: "home", level: 0, open: true },
  { label: "assam.gpkg", kind: "db", level: 1, closed: true },
  { label: "assam_roads.sdat", kind: "raster", level: 1 },
  { label: "overlay.tif", kind: "raster", level: 1, selected: true },
  { label: "OverlayAnalysis", kind: "qgis", level: 1, closed: true },
  ...["raster_assam_boundary.tif", "raster_assam_protected_regions.tif", "raster_assam_water_polygons.tif", "raster_assam_water_polylines.tif", "raster_water.tif", "raster_water_merged.tif", "Rasterized_assamboundary.tif", "Rasterized_assamprotected_regions.tif", "Rasterized_assamwater_polygons.tif", "Rasterized_assamwater_polylines.tif"].map((label): Node => ({ label, kind: "raster", level: 1 })),
];

function NodeIcon({ kind }: { kind: Node["kind"] }) {
  if (kind === "folder") return <FolderIcon />;
  if (kind === "bookmarks") return <BookmarksIcon />;
  if (kind === "home") return <HomeIcon />;
  if (kind === "db") return <DbIcon />;
  if (kind === "qgis") return <QgisIcon />;
  return <RasterIcon />;
}

function BrowserDock() {
  return (
    <section>
      <header className="flex h-[46px] items-center justify-between pr-[3px] pl-[8px]">
        <h2 className="text-[23px] tracking-[-0.2px] text-[#262626]">Browser</h2>
        <DockButtons />
      </header>
      <div className="flex h-[50px] items-center gap-[18px] pl-[16px]">
        <AddLayer /><Refresh s={32} /><Funnel /><TreeArrow /><InfoIcon />
      </div>
      <div className="mt-[7px] flex h-[664px] flex-col border-2 border-[#bdbdbd] bg-white">
        <div className="flex h-[634px]">
          <div className="w-[723px] overflow-hidden">
            {browserRows.map((r) => (
              <div key={r.label} className={r.selected ? "flex h-[36px] items-center bg-[#dbdbdb]" : "flex h-[36px] items-center"}>
                <div className={r.level ? "flex w-[58px] shrink-0 justify-center pl-[36px]" : "flex w-[30px] shrink-0 justify-center"}>
                  {r.open && <Down w={15} />}
                  {r.closed && <Right />}
                </div>
                <div className={r.level ? "flex w-[56px] shrink-0 justify-center" : "flex w-[52px] shrink-0 justify-center"}><NodeIcon kind={r.kind} /></div>
                <span className="whitespace-nowrap text-[26px] tracking-[-0.2px] text-[#1f1f1f]"><Name text={r.label} /></span>
              </div>
            ))}
          </div>
          <div className="flex w-[26px] flex-col border-l-2 border-[#bdbdbd]">
            <div className="flex h-[26px] items-center justify-center border-b-2 border-[#bdbdbd]"><Up /></div>
            <div className="h-[36px] border-b-2 border-[#bdbdbd] bg-[#ebebeb]" />
            <div className="h-[202px] border-b-2 border-[#bdbdbd] bg-[#fcfcfc]" />
            <div className="h-[342px] border-b-2 border-[#bdbdbd] bg-[#ebebeb]" />
            <div className="flex flex-1 items-center justify-center"><Down /></div>
          </div>
        </div>
        <div className="flex flex-1 border-t-2 border-[#bdbdbd]">
          <div className="flex w-[27px] items-center justify-center border-r-2 border-[#bdbdbd]"><Left /></div>
          <div className="w-[598px] border-r-2 border-[#bdbdbd] bg-gradient-to-b from-white to-[#f4f4f4]" />
          <div className="w-[70px] border-r-2 border-[#bdbdbd] bg-[#ebebeb]" />
          <div className="flex w-[28px] items-center justify-center border-r-2 border-[#bdbdbd]"><Right /></div>
          <div className="flex-1 bg-[#f3f3f3]" />
        </div>
      </div>
    </section>
  );
}

const Check = ({ on }: { on?: boolean }) => (
  <span className="flex h-[28px] w-[28px] shrink-0 items-center justify-center rounded-[2px] border-2 border-[#bcbcbc] bg-white">
    {on && <svg width="18" height="20" viewBox="0 0 18 20" fill="none"><path d="M2 10.500l5 7.500L15.500 1.500" stroke="#1b1b1b" strokeWidth="3" /></svg>}
  </span>
);

const legend: [string, string][] = [["Not Suitable", "bg-[#d7191c]"], ["Least Suitable", "bg-[#fdae61]"], ["Suitable", "bg-[#ffffc0]"], ["Moderately Suitable", "bg-[#a6d96a]"], ["Most Suitable", "bg-[#1a9641]"]];
type Layer = { name: string; kind: "raster" | "line" | "fill"; cls?: string; on?: boolean; active?: boolean };
const layers: Layer[] = [
  ...["water_reclass", "roads_reclass", "water_proximity", "water_reclass", "roads_proximity", "raster_water", "raster_water_merged", "rasterized_water_polylines", "rasterized_water_polygons", "rasterized_protected_regions"].map((name): Layer => ({ name, kind: "raster" })),
  { name: "rasterized_boundary", kind: "raster", on: true },
  { name: "rasterized_roads", kind: "raster" },
  { name: "roads", kind: "line", cls: "bg-[#8a8a8a]" },
  { name: "water_polylines", kind: "line", cls: "bg-[#8d8de6]" },
  { name: "boundary", kind: "fill", cls: "bg-white border-[#8a8a8a]", on: true, active: true },
  { name: "protected_regions", kind: "fill", cls: "bg-[#0a9e14] border-[#075c0c]" },
  { name: "water_polygons", kind: "fill", cls: "bg-[#0a10cc] border-[#060a66]" },
];

function LayersDock() {
  return (
    <section className="mt-[11px]">
      <header className="flex h-[46px] items-center justify-between pr-[3px] pl-[8px]">
        <h2 className="text-[23px] tracking-[-0.2px] text-[#262626]">Layers</h2>
        <DockButtons />
      </header>
      <div className="mt-[3px] flex h-[46px] items-center pl-[8px]">
        <div className="mr-[10px] flex h-[46px] w-[48px] items-center justify-center rounded-[5px] border-2 border-[#b0b0b0] bg-[#dedede]"><BrushIcon s={32} /></div>
        <div className="flex items-center gap-[18px]">
          <AddGroup /><EyeIcon /><Funnel arrow />
          <div className="mr-[-3px] flex items-center gap-[12px]"><EpsFilter /><Down /></div>
          <TreeArrow down /><TreeArrow /><RemoveLayer />
        </div>
      </div>
      <div className="mt-[8px] h-[929px] border-2 border-[#bdbdbd] bg-white">
        <div className="flex h-[36px] items-center pl-[12px]">
          <Down w={16} /><span className="ml-[18px] flex"><Check on /></span><span className="ml-[16px] flex"><RasterIcon /></span>
          <span className="ml-[15px] text-[26px] font-bold tracking-[0.100px] text-[#1f1f1f]">overlay</span>
        </div>
        <div className="flex h-[32px] items-center pl-[87px] text-[26px] tracking-[-0.2px] text-[#1f1f1f]">Band 1 (Gray)</div>
        {legend.map(([name, cls]) => (
          <div key={name} className="flex h-[36px] items-center pl-[86px]">
            <span className={`h-[32px] w-[32px] ${cls}`} />
            <span className="ml-[12px] text-[26px] tracking-[-0.2px] text-[#1f1f1f]">{name}</span>
          </div>
        ))}
        {layers.map((l, i) => (
          <div key={i} className={l.active ? "flex h-[36px] items-center bg-[#dbdbdb]" : "flex h-[36px] items-center"}>
            <span className="flex w-[46px] shrink-0 justify-center pr-[6px]">{l.kind === "raster" && <Right />}</span>
            <Check on={l.on} />
            <span className="ml-[12px] flex w-[34px] shrink-0 items-center justify-center">
              {l.kind === "raster" && <RasterIcon />}
              {l.kind === "line" && <span className={`h-[2px] w-[30px] ${l.cls}`} />}
              {l.kind === "fill" && <span className={`h-[32px] w-[32px] border ${l.cls}`} />}
            </span>
            <span className={l.active ? "ml-[10px] text-[26px] font-bold tracking-[0.100px] text-black underline decoration-[3px] underline-offset-[4px]" : l.on ? "ml-[10px] text-[26px] font-bold tracking-[0.300px] text-[#1f1f1f]" : "ml-[10px] text-[26px] font-bold tracking-[0.220px] text-[#808080] italic"}><Name text={l.name} /></span>
          </div>
        ))}
      </div>
    </section>
  );
}

/* ------------------------------------------------------------------ */
/* Map canvas: five suitability classes over a red background          */
/* ------------------------------------------------------------------ */

const O = [253, 174, 97], Y = [255, 255, 192], G = [166, 217, 106], D = [26, 150, 65];
type Ramp = [number, number[]][];
const green: Ramp = [[0.2, D], [0.42, G], [0.475, Y], [0.515, O], [0.575, Y], [0.79, G], [1, D]];
const mixed: Ramp = [[0.18, D], [0.4, G], [0.465, Y], [0.52, O], [0.6, Y], [0.8, G], [1, D]];
const warm: Ramp = [[0.14, D], [0.34, G], [0.46, Y], [0.54, O], [0.66, Y], [0.85, G], [1, D]];

function Classes({ id, fx, fy, seed, ramp }: { id: string; fx: number; fy: number; seed: number; ramp: Ramp }) {
  const table = Array.from({ length: 100 }, (_, i) => ramp.find(([max]) => (i + 0.5) / 100 < max)![1]);
  const channel = (k: number) => table.map((c) => (c[k] / 255).toFixed(3)).join(" ");
  return (
    <filter id={id} x="0" y="0" width="1" height="1" colorInterpolationFilters="sRGB">
      <feTurbulence type="fractalNoise" baseFrequency={`${fx} ${fy}`} numOctaves={2} seed={seed} />
      <feColorMatrix values="1 0 0 0 0 1 0 0 0 0 1 0 0 0 0 0 0 0 0 1" />
      <feComponentTransfer>
        <feFuncR type="discrete" tableValues={channel(0)} />
        <feFuncG type="discrete" tableValues={channel(1)} />
        <feFuncB type="discrete" tableValues={channel(2)} />
      </feComponentTransfer>
    </filter>
  );
}

const W = "translate(1010 690) scale(.5421 .5102)";
const E = "translate(1650 690) scale(.6760 .7398)";

const westLand = "M113 740L122 790 150 775 178 785 190 805 235 812 265 800 290 790 335 805 340 765 365 735 375 715 388 685 400 700 403 662 445 690 450 715 465 735 468 787 560 795 645 807 655 790 690 785 715 765 740 765 755 733 800 737 845 725 855 708 880 710 910 717 970 708 1000 712 1035 722 1045 700 1070 675 1110 682 1125 662 1160 685 1190 688 1207 662 1290 660 1290 1110 1220 1105 1150 1120 1110 1150 1090 1140 1085 1115 1060 1105 1020 1115 970 1110 960 1140 925 1160 905 1190 890 1215 887 1248 845 1248 858 1215 850 1180 825 1175 790 1190 770 1225 720 1246 670 1235 640 1200 600 1205 560 1195 550 1215 530 1190 490 1200 475 1220 470 1200 440 1190 425 1170 455 1130 430 1145 380 1165 340 1155 300 1185 240 1185 200 1200 180 1235 145 1260 140 1300 115 1310 145 1350 175 1385 160 1390 130 1380 105 1410 97 1455 93 1455 105 1380 95 1330 85 1310 90 1260 95 1210 90 1150 70 1130 75 1100 60 1070 35 1045 40 1000 60 970 90 950 105 910 110 880 115 850 120 800zM300 672l14 4 10 22 20 18-22-6-20-8-8-16z";
const eastLand = "M0 470L20 458 60 462 105 455 110 465 165 468 205 465 210 430 225 432 240 450 300 455 325 462 360 442 390 455 440 445 500 432 560 438 630 428 650 410 690 385 685 360 705 340 735 310 740 290 790 265 840 235 835 215 855 210 850 185 870 195 940 185 1000 160 1085 130 1090 118 1160 100 1240 70 1265 66 1296 75 1285 98 1240 122 1270 125 1265 140 1225 145 1210 170 1285 165 1305 148 1335 125 1330 95 1320 90 1320 65 1365 30 1440 18 1515 20 1500 50 1465 75 1440 90 1450 150 1485 190 1486 215 1500 232 1512 238 1508 258 1470 280 1400 308 1360 300 1390 280 1395 255 1380 232 1350 225 1328 240 1325 270 1305 310 1290 350 1240 390 1210 410 1150 440 1100 435 1090 460 1060 500 1020 520 940 545 940 560 915 570 915 600 880 620 870 590 850 600 830 660 790 690 760 740 750 800 750 845 700 870 683 883 678 865 680 825 640 850 665 820 670 760 670 720 690 680 665 640 655 600 650 572 600 580 540 578 430 588 375 592 375 620 340 660 290 690 275 740 310 755 350 750 352 700 380 720 445 690 435 720 445 740 430 770 460 800 440 815 440 860 395 850 355 865 395 890 330 920 290 880 240 835 205 830 210 790 180 750 110 755 60 775 0 768z";
const southLand = "M38 840L45 815 115 800 118 780 160 778 163 838 235 840 245 865 265 885 268 908 285 935 240 938 240 985 235 990 200 980 190 960 170 955 145 915 100 915 70 925 40 935 38 890 60 860zM212 1015L232 990 290 995 378 993 385 1050 395 1108 440 1112 490 1080 550 1072 552 1085 525 1100 505 1130 505 1165 470 1195 445 1185 447 1145 400 1148 370 1145 368 1125 330 1115 285 1118 280 1110 285 1080 270 1060 215 1035z";
const hillLand = "M140 1205L160 1200 190 1215 270 1230 350 1232 380 1230 400 1210 392 1240 410 1260 380 1300 365 1340 355 1395 320 1400 290 1435 290 1395 260 1400 240 1440 210 1465 217 1500 188 1508 180 1530 170 1546 150 1548 138 1520 178 1508 190 1450 190 1390 182 1330 205 1262 180 1290 130 1300 112 1330 105 1380 98 1450 82 1503 90 1440 97 1385 70 1425 65 1380 62 1340 75 1310 68 1270 72 1245 95 1245 130 1264 170 1258 168 1235zM163 1298L184 1290 165 1350 155 1400 145 1450 125 1490 130 1440 145 1400 125 1370 135 1330z";
const wisps = "M450 790L515 812 545 825 545 860 525 890M645 870L600 900 565 945M430 910L500 900 560 885 610 885M290 1170L320 1160 385 1155M405 1070L440 1112M410 1010L450 1015M480 1040l30 20 40-20M455 1255l5-40 10-20M400 1290l40-15M345 1240l40-30 12-10M300 1450l6-2M232 410L260 418 290 425 303 455M350 700l60-25M1500 232l30 8";

function MapCanvas() {
  return (
    <svg width="1668" height="1136" viewBox="1024 702 1668 1136">
      <defs>
        <Classes id="ridges" fx={0.07} fy={0.016} seed={4} ramp={green} />
        <Classes id="foothills" fx={0.05} fy={0.04} seed={15} ramp={mixed} />
        <Classes id="valley" fx={0.018} fy={0.07} seed={11} ramp={mixed} />
        <Classes id="hills" fx={0.025} fy={0.06} seed={23} ramp={warm} />
        <Classes id="spurs" fx={0.06} fy={0.02} seed={31} ramp={warm} />
        <filter id="rough" x="-5%" y="-5%" width="110%" height="110%">
          <feTurbulence type="fractalNoise" baseFrequency="0.09" numOctaves={3} seed={7} />
          <feDisplacementMap in="SourceGraphic" scale="20" xChannelSelector="R" yChannelSelector="G" />
        </filter>
        <mask id="land" maskUnits="userSpaceOnUse" x="1024" y="702" width="1668" height="1136">
          <g filter="url(#rough)" fill="#fff">
            <path d={westLand} transform={W} />
            <g transform={E}><path d={eastLand} /><path d={southLand} /><path d={hillLand} /><path d={wisps} fill="none" stroke="#fff" strokeWidth="5" /></g>
          </g>
        </mask>
        <clipPath id="eastHalf"><path d="M2050 702h642v560H2050z" /></clipPath>
      </defs>
      <rect x="1024" y="702" width="1668" height="1136" fill="#d7191c" />
      <g mask="url(#land)">
        <rect x="1024" y="960" width="1060" height="420" filter="url(#ridges)" />
        <rect x="1024" y="1235" width="760" height="240" filter="url(#foothills)" />
        <g clipPath="url(#eastHalf)"><rect x="1900" y="500" width="900" height="1000" transform="rotate(-38 2350 980)" filter="url(#valley)" /></g>
        <rect x="1700" y="1140" width="380" height="260" filter="url(#foothills)" />
        <rect x="1660" y="1262" width="180" height="180" filter="url(#hills)" />
        <rect x="1780" y="1400" width="260" height="180" filter="url(#hills)" />
        <rect x="1660" y="1570" width="320" height="270" filter="url(#spurs)" />
        <rect x="2090" y="1120" width="80" height="230" filter="url(#ridges)" />
        <g filter="url(#rough)">
          <g transform={W}>
            <path d="M485 800L560 795 530 845 490 835zM800 840L820 775 845 770 835 820 805 865zM1050 800L1070 765 1080 800 1068 850zM1038 900l22-25-5 75-12-5zM750 995L755 970 865 940 858 990zM590 1145L640 1145 615 1200 590 1180zM755 1165L825 1150 790 1190 765 1220zM1410 885L1455 880 1445 925zM375 735L395 800 385 820zM375 1125l50 0-10 20zM520 1155l15 5-8 35-15-5zM890 1215L900 1180 940 1155zM675 1200l35 0 5 40-35-5z" fill="#1a9641" />
            <path d="M112 1300L128 1180 185 1160 M420 1035L510 1045 M880 1085L960 1080 1060 1030 1160 990 1280 895" fill="none" stroke="#fdae61" strokeWidth="32" />
            <g fill="#d7191c" stroke="#fdae61" strokeWidth="44" strokeLinejoin="round" paintOrder="stroke">
              <path d="M195 1145L200 1110 240 1080 300 1060 400 1035 395 1050 350 1075 300 1085 240 1110 215 1140z" />
              <path d="M510 1050L530 1020 560 1022 600 1010 605 1035 650 1050 680 1032 720 1050 865 1042 865 1080 820 1085 770 1070 700 1065 650 1070 605 1090 590 1075 540 1075z" />
              <path d="M1165 985L1185 950 1215 925 1245 925 1240 945 1205 980 1200 1000z" />
              <path d="M1280 885L1295 850 1360 850 1410 840 1435 810 1450 835 1490 825 1520 845 1530 880 1505 895 1470 885 1470 862 1400 860 1340 875 1320 890z" />
              <path d="M125 1270L145 1190 175 1180 150 1235z" strokeWidth="20" />
            </g>
            <path d="M115 1070L120 960 155 915 190 940 235 1010 225 1045 180 1075 150 1075zM315 970l28-25 5 45zM350 930l15-25 5 30zM405 935l10-35 10 30zM430 990l5-60 25 15-20 55zM470 910l20-20 5 25-20 5zM275 940l15 0-5 20zM1080 1060l50-10-5 40-40 10zM1265 1055l25-15v25zM1010 1020l20-30 5 30z" fill="#d7191c" />
            <path d="M790 1062l30-12 30 8-20 12z" fill="#fdae61" />
            <path d="M160 1010l20 30-10 30-10-20z" fill="#1a9641" />
          </g>
          <g transform={E}>
            <path d="M1060 235L1140 195 1290 180 1320 200 1325 260 1290 350 1230 370 1120 390 1050 360 1040 290z" fill="#a6d96a" opacity=".6" />
            <path d="M750 450L830 460 890 440 930 400 980 350 1000 290 1050 225 1100 190 1200 182 1290 178 1340 130 1330 85 1430 90M1290 80L1210 140 1130 165 1060 210" fill="none" stroke="#fdae61" strokeWidth="26" />
            <path d="M322 462L325 570 M370 560L460 565 M640 540L690 540 800 500M830 250L840 340M900 330L960 300M870 400L960 350" fill="none" stroke="#fdae61" strokeWidth="16" />
            <path d="M1055 340C1100 310 1200 330 1300 300M1070 300C1130 260 1200 300 1310 280M1080 250C1150 210 1220 250 1315 240M1050 380C1100 350 1180 370 1270 340" fill="none" stroke="#ffffc0" strokeWidth="11" />
            <g fill="#d7191c" stroke="#fdae61" strokeWidth="24" strokeLinejoin="round" paintOrder="stroke">
              <path d="M455 560L460 535 500 530 540 518 580 515 600 500 660 495 700 470 730 440 750 455 775 465 740 490 690 515 660 535 600 525 540 527 480 545z" />
              <path d="M0 690L0 655 20 640 50 640 30 680z" />
              <path d="M75 600L90 580 150 578 200 555 260 570 300 590 275 615 230 612 220 595 150 590z" />
              <path d="M370 560L400 548 440 545 430 560 385 566z" />
            </g>
            <path d="M825 340L835 300 850 330 835 362zM980 375L1015 350 1010 380zM1010 290L1030 270 1018 300zM1080 212L1110 178 1135 170 1130 190 1090 212zM945 380l30-18-10 20zM892 430l14-14v20zM1100 265l15-8 0 14zM1140 265l25 0-5 8zM470 445l35-8 5 20-25 5zM1330 240l30-15 25 25-15 40-40 15zM1385 205l45 0 10 35-30 15-25-20zM1395 100l12 10-3 20zM665 640l60-5-20 30-30 10zM60 720l25-5v20zM360 715l30-20 10 20z" fill="#d7191c" />
            <path d="M345 490L360 465 410 480 430 460 462 490 440 520 400 530 360 525zM240 475L270 510 262 540 245 525zM705 350L720 335 745 370 725 370zM870 490L925 478 940 515 915 545 905 505zM975 465L1020 450 1045 480 1020 500 985 490zM710 560L755 540 775 600 800 625 820 570 870 560 835 590 830 650 800 650 785 680 765 620zM1310 210L1335 190 1365 225 1320 240zM1350 140L1390 130 1375 155zM1410 185L1480 185 1485 205 1415 200zM680 865L725 850 685 885zM1070 435L1095 425 1085 455zM1200 310L1215 298 1225 315 1210 322zM1230 370L1270 345 1240 385zM275 740L280 700 330 655 300 705zM185 610L220 608 235 630 205 640zM545 445L560 440 575 480 555 475zM575 585l35-25 15 8-20 15zM60 1390L80 1390 68 1425zM262 1035L310 1050 290 1048zM120 795l40-15v20l-40 5zM45 905l25-18-20 22zM75 825l25 0v12h-25zM890 200l25-5 0 15h-20zM690 630l15-12 8 20-20 5zM150 490l8 25-5 0zM400 760l35-15-5 22zM340 1335l25-8-10 15zM1080 350l30-12-10 12z" fill="#1a9641" />
            <path d="M100 900l20-22 20 0-25 30M170 945l40-8 30 0M220 895l30-2 18 12M320 1060l20 0-10 20 10 15-25 20M285 1022l20 4M185 1320L200 1270" fill="none" stroke="#d7191c" strokeWidth="8" />
            <path d="M90 1310l-15 60M150 1310l-12 55M205 1340l5 30M130 895l50-40M200 960l30 20M380 1010l10 90M450 1100l90-20M465 1150l30 10M690 690l-15 90M740 640l-15 80M145 1545l25-30" fill="none" stroke="#fdae61" strokeWidth="12" />
            <path d="M270 1330l-15 60M285 1340l-8 70M300 1350l-5 60M320 1360l-10 50M250 1270l-15 70M345 1350l-12 40M230 1400l-20 50" fill="none" stroke="#d7191c" strokeWidth="5" />
          </g>
        </g>
      </g>
    </svg>
  );
}

/* ------------------------------------------------------------------ */
/* Layer styling dock                                                  */
/* ------------------------------------------------------------------ */

function Combo({ cls, icon, label, pl = "pl-[10px]" }: { cls: string; icon?: React.ReactNode; label: string; pl?: string }) {
  return (
    <div className={`flex shrink-0 items-center rounded-[6px] border-2 border-[#b3b3b3] bg-gradient-to-b from-white to-[#f1f1f1] pr-[14px] ${pl} ${cls}`}>
      {icon}
      <span className="pt-px text-[26px] tracking-[-0.300px] text-black">{label}</span>
      <span className="ml-auto flex"><Down /></span>
    </div>
  );
}

function Spin({ cls, value, small, upDim }: { cls: string; value: string; small?: boolean; upDim?: boolean }) {
  return (
    <div className={`flex shrink-0 rounded-[6px] border-2 border-[#b3b3b3] bg-white ${cls}`}>
      <span className={small ? "flex flex-1 items-center pl-[8px] text-[22px] text-[#262626]" : "flex flex-1 items-center pl-[9px] text-[26px] tracking-[-0.300px] text-[#262626]"}>{value}</span>
      <span className="flex w-[29px] flex-col items-center justify-center gap-[8px] border-l-2 border-[#c4c4c4]"><Up w={15} color={upDim ? "#a6a6a6" : "#555"} /><Down w={15} /></span>
    </div>
  );
}

function Slider({ w }: { w: string }) {
  return (
    <div className={`flex shrink-0 items-center ${w}`}>
      <div className="h-[10px] flex-1 rounded-l-[4px] border-2 border-[#2f6fbd] bg-[#559cf0]" />
      <div className="h-[26px] w-[26px] rounded-[5px] border-2 border-[#b3b3b3] bg-white" />
    </div>
  );
}

const Btn = ({ children, dim }: { children: React.ReactNode; dim?: boolean }) => (
  <div className={dim ? "flex h-[45px] w-[47px] shrink-0 items-center justify-center rounded-[5px] border-2 border-[#cdcdcd] bg-[#f9f9f9]" : "flex h-[45px] w-[47px] shrink-0 items-center justify-center rounded-[5px] border-2 border-[#b0b0b0] bg-gradient-to-b from-white to-[#f3f3f3]"}>{children}</div>
);
const Txt = ({ children, cls = "", tone = "text-[#262626]" }: { children: React.ReactNode; cls?: string; tone?: string }) => <span className={`whitespace-nowrap text-[26px] tracking-[-0.280px] ${tone} ${cls}`}>{children}</span>;
const Heading = ({ children }: { children: React.ReactNode }) => <span className="whitespace-nowrap text-[26px] leading-[34px] font-bold tracking-[0.200px] text-[#262626]">{children}</span>;

const TabCell = ({ children }: { children: React.ReactNode }) => <div className="flex h-[64px] items-center pl-[8px]">{children}</div>;

function StyleTabs() {
  return (
    <div className="mt-[9px] mb-[5px] flex w-[76px] shrink-0 flex-col">
      <div className="flex h-[68px] items-center pt-[4px] pl-[12px]"><BrushIcon /></div>
      <div className="flex-1 bg-[#5e5e5e]">
        <TabCell><Ic><g transform="translate(.300 2.400)"><Tag fill="#fff17a" stroke="#c4a000" color="#222" /></g></Ic></TabCell>
        <TabCell><Ic><text x=".500" y="15" fontSize="11" fontWeight="700" fill="#3a4250" stroke="#eef1fb" strokeWidth="4" strokeLinejoin="round" paintOrder="stroke" className="font-['Open_Sans']">abc</text></Ic></TabCell>
        <TabCell><Ic><path d="M2 8.500v8.500l9.500 6v-9z" fill="#8ae234" stroke="#4e7a12" strokeWidth=".7" /><path d="M21 8.500v8.500l-9.500 6v-9z" fill="#fce94f" stroke="#b8960c" strokeWidth=".7" /><path d="M11.500.900L20 7.500l-8.500 6L3 7.500z" fill="#f58a8a" stroke="#b01313" strokeWidth="1" /></Ic></TabCell>
        <TabCell><ChartIcon /></TabCell>
        <TabCell><Ic><path d="M7 2.500c5-1 9 2 14.500 0v17c-6 2-12-1.500-20.500 1z" fill="#c9c9c9" stroke="#999" strokeWidth=".8" /><path d="M8 4l4 6-8 4zM14 4l-2 6 4 4 5-8z" fill="#f0f0f0" /><path d="M13 3l-3 16M4 10l17 1M17 4l-1 15" stroke="#8a8a8a" strokeWidth=".8" /></Ic></TabCell>
        <TabCell><Ic><path d="M5.500 6v10M18 6v10M11.800 8v12" stroke="#c98634" strokeWidth="2.200" /><path d="M7 1h9.500v6.500H7z" fill="#ee6a6a" /><path d="M7 7.500h9.500l-3 3h-3z" fill="#c98634" /><path d="M.500 16.500h9.500v6.500H.500z" fill="#fce94f" /><path d="M13.500 16.500h9.500v6.500h-9.500z" fill="#8ab4e8" /><path d="M2.500 14h6l1.500 2.500H.500zM15.500 14h6l1.500 2.500h-9.500z" fill="#c98634" /></Ic></TabCell>
        <TabCell>
          <Ic><g transform="translate(15.500 0) scale(-.620 .620)"><path d={ARROW_BACK} fill="#8cc08c" stroke="#5a905a" strokeWidth=".8" /></g><g transform="translate(8.500 8.500) scale(.62)"><path d={ARROW_BACK} fill="#e8803a" stroke="#b0541a" strokeWidth=".8" /></g></Ic>
        </TabCell>
      </div>
    </div>
  );
}

function SymbolTree() {
  return (
    <div className="mt-[20px] flex h-[237px]">
      <div className="mt-[66px] ml-[40px] h-[122px] w-[123px] shrink-0 rounded-[2px] border-[3px] border-[#222] bg-white" />
      <div className="mt-[14px] ml-[49px] h-[223px] w-[359px] shrink-0 border-2 border-[#bdbdbd] bg-white">
        <div className="flex h-[36px] items-center bg-[#dbdbdb] pl-[12px]">
          <Down /><span className="ml-[18px] h-[32px] w-[32px] border-2 border-[#222] bg-white" /><span className="ml-[13px] text-[26px] font-bold tracking-[-0.300px] text-black">Fill</span>
        </div>
        <div className="flex h-[36px] items-center pl-[86px]"><span className="h-[32px] w-[32px] border-2 border-[#222] bg-white" /><Txt cls="ml-[13px]">Simple Fill</Txt></div>
      </div>
      <div className="ml-[13px] grid h-[153px] grid-cols-[47px_47px] gap-x-[13px] gap-y-[9px]">
        <Btn><svg width="30" height="30" viewBox="0 0 15 15"><path d="M5.300 1h4.400v4.300H14v4.400H9.700V14H5.300V9.700H1V5.300h4.300z" fill="#fff" stroke="#4f864f" strokeWidth=".9" /><path d="M7.500 2.700v9.600M2.700 7.500h9.600" stroke="#5a8c5a" strokeWidth="1.900" /></svg></Btn>
        <Btn dim><svg width="28" height="24" viewBox="0 0 28 24"><path d="M14 1.500L26.500 22.500h-25z" fill="#d8dcde" stroke="#c3c6c8" strokeWidth="1.500" /></svg></Btn>
        <Btn dim><svg width="28" height="14" viewBox="0 0 28 14"><path d="M1 1h26v12H1z" fill="#fff" stroke="#dcc8c8" strokeWidth="1.500" /><path d="M5 7h18" stroke="#dec5c5" strokeWidth="4" /></svg></Btn>
        <Btn dim><svg width="28" height="24" viewBox="0 0 28 24"><path d="M14 22.500L26.500 1.500h-25z" fill="#d8dcde" stroke="#c3c6c8" strokeWidth="1.500" /></svg></Btn>
        <Btn dim><Ic s={32} dim><path d="M3 6v17h12M6 2h15v17H6z" fill="#fff" stroke="#666" strokeWidth="1.300" /><rect x="14" y="15" width="9" height="9" rx="1.500" fill="#a8a47c" /><path d="M18.500 16.500v6M15.500 19.500h6" stroke="#fff" strokeWidth="1.200" /></Ic></Btn>
        <Btn dim><svg width="32" height="34" viewBox="0 0 32 34" fill="none"><path d="M8 8c2-8 16-8 15 3l-4 6" stroke="#d0d0d0" strokeWidth="3" /><path d="M4 16h23v14H4z" fill="#e3dfcf" stroke="#d3cfbf" /><path d="M22 26h10l-5 6z" fill="#444" /></svg></Btn>
      </div>
    </div>
  );
}

function SymbolList() {
  return (
    <div className="mt-[9px] flex h-[424px] w-[674px] border-2 border-[#bdbdbd] bg-white">
      <div className="flex flex-1 flex-col pl-[9px]">
        <div className="flex h-[49px] w-[618px] items-end border-b-2 border-[#949494]"><Heading>Default</Heading></div>
        <div className="flex h-[50px] w-[618px] items-end border-b-2 border-[#949494]"><Heading>Project Styles</Heading></div>
        <div className="mt-[40px] flex">
          <div className="flex w-[250px] flex-col items-center">
            <svg width="127" height="110" viewBox="0 0 127 110">
              <defs>
                <radialGradient id="plasma" cx="0" cy="0" r="158" gradientUnits="userSpaceOnUse">
                  <stop offset="0" stopColor="#0d0887" /><stop offset=".25" stopColor="#6a00a8" /><stop offset=".36" stopColor="#8f0da4" /><stop offset=".5" stopColor="#b93289" /><stop offset=".7" stopColor="#e76f5a" /><stop offset=".87" stopColor="#fdae32" /><stop offset="1" stopColor="#f6ea24" />
                </radialGradient>
              </defs>
              <rect x="1.500" y="1.500" width="124" height="107" rx="2" fill="url(#plasma)" stroke="#000" strokeWidth="3" />
            </svg>
            <span className="mt-[67px] whitespace-pre text-[18px] tracking-[0.300px] text-[#262626]">gradient   plasma</span>
          </div>
          <div className="ml-[12px] flex w-[246px] flex-col items-center">
            <div className="mt-[3px] h-[104px] w-[123px] rounded-[2px] border border-[#ababab] bg-[#959595]" />
            <span className="mt-[70px] text-[18px] tracking-[0.300px] text-[#262626]">gray 3 fill</span>
          </div>
        </div>
      </div>
      <div className="flex w-[28px] shrink-0 flex-col border-l-2 border-[#bdbdbd]">
        <div className="flex h-[27px] items-center justify-center border-b-2 border-[#bdbdbd]"><Up /></div>
        <div className="h-[74px] border-b-2 border-[#bdbdbd] bg-[#fcfcfc]" />
        <div className="h-[294px] border-b-2 border-[#bdbdbd] bg-[#ebebeb]" />
        <div className="flex flex-1 items-center justify-center"><Down /></div>
      </div>
    </div>
  );
}

const Magnify = ({ s = 26 }: { s?: number }) => <svg width={s} height={s} viewBox="0 0 26 26" fill="none" className="shrink-0"><circle cx="10.500" cy="10.500" r="8.500" stroke="#8f8f8f" strokeWidth="2" /><path d="M16.500 17l8 7.500" stroke="#8f8f8f" strokeWidth="2.600" /></svg>;

function StylingDock() {
  return (
    <section className="flex w-[836px] shrink-0 flex-col pl-[19px]">
      <header className="flex h-[47px] items-center justify-between pr-[5px] pl-[2px]">
        <h2 className="text-[23px] tracking-[-0.2px] text-[#262626]">Layer Styling</h2>
        <DockButtons />
      </header>
      <Combo cls="h-[47px] w-[810px]" label="boundary" icon={<svg width="34" height="32" viewBox="0 0 34 32" className="mr-[5px]"><path d="M5 3c5-3 8 3 13 2s8-3 12 0c3 5 3 16 0 19s-6-4-11-4-8 8-13 7S0 6 5 3z" fill="#e4e4e4" stroke="#8a8a8a" strokeWidth="2" /></svg>} />
      <div className="flex flex-1">
        <StyleTabs />
        <div className="ml-[6px] flex w-[728px] flex-col pt-[25px]">
          <Combo cls="h-[47px] w-[728px]" label="Inverted Polygons" pl="pl-[12px]" icon={<span className="mr-[9px] flex h-[28px] w-[28px] items-center justify-center bg-[#00b85c]"><span className="h-[16px] w-[16px] border-2 border-[#0b4a2c] bg-white" /></span>} />
          <div className="flex flex-col pr-[18px] pl-[18px]">
            <div className="mt-[31px] flex h-[47px] items-center justify-between">
              <Txt>Sub renderer</Txt>
              <Combo cls="h-[47px] w-[340px]" label="Single Symbol" pl="pl-[14px]" icon={<svg width="27" height="29" viewBox="0 0 27 29" className="mr-[8px]"><g fill="#00b85c" stroke="#0b5a34" strokeWidth="1.800"><path d="M1 1.500h20v6H1zM5 11.500h20v6H5zM1 21.500h20v6H1z" /></g></svg>} />
            </div>
            <div className="mt-[21px] flex h-[28px] items-center"><Check /><Txt cls="ml-[10px]">Merge polygons before rendering (slow)</Txt></div>
            <SymbolTree />
            <div className="mt-[30px] h-[2px] bg-[#c8c8c8]" />
            <div className="mt-[15px] flex h-[56px] items-center">
              <Txt cls="w-[108px]">Color</Txt>
              <div className="flex h-[56px] w-[541px] rounded-[5px] border-2 border-[#b3b3b3] bg-[#f8f8f8] p-[8px]"><div className="flex-1 rounded-[5px] bg-white" /></div>
              <div className="ml-px flex h-[56px] w-[24px] items-center justify-center rounded-[5px] border-2 border-[#b3b3b3] bg-[#fafafa]"><Down w={15} /></div>
            </div>
            <div className="mt-[16px] flex h-[43px] items-center">
              <Txt cls="w-[110px]">Opacity</Txt>
              <Slider w="w-[284px]" />
              <Spin cls="ml-[8px] h-[43px] w-[200px]" value="100.0 %" upDim />
              <svg width="38" height="34" viewBox="0 0 38 34" fill="none" className="ml-[18px]"><path d="M9 5L1 16l8 11z" fill="#999" stroke="#666" strokeWidth="1.500" /><path d="M10 1.500h25v31H10z" fill="#f8f8f8" stroke="#777" strokeWidth="2.500" /><path d="M14 9h17" stroke="#666" strokeWidth="4" /><path d="M10 16h25M15 23.500h15" stroke="#777" strokeWidth="2" /></svg>
              <span className="mt-[22px] ml-[5px] flex"><Down w={9} /></span>
            </div>
            <div className="mt-[18px] flex h-[47px] items-center"><Txt cls="w-[108px]">Unit</Txt><Combo cls="h-[47px] w-[566px]" label="Millimeters" pl="pl-[8px]" /></div>
            <div className="mt-[8px] h-[2px] w-[674px] bg-[#c8c8c8]" />
            <div className="mt-[12px] flex h-[48px] items-center">
              <div className="flex h-[48px] w-[614px] items-center rounded-[5px] border-2 border-[#b3b3b3] bg-white pl-[20px]">
                <Magnify /><Txt cls="ml-[12px]">Favorites</Txt>
                <svg width="28" height="22" viewBox="0 0 28 22" className="mr-[17px] ml-auto"><path d="M8 0h20v22H8L0 11z" fill="#8f8f8f" /><path d="M12 6l10 10M22 6L12 16" stroke="#fff" strokeWidth="2.500" /></svg>
                <div className="flex h-[44px] w-[40px] items-center justify-center border-l-2 border-[#c9c9c9]"><Down /></div>
              </div>
              <span className="ml-[20px] flex"><StyleMgr s={32} /></span>
            </div>
            <SymbolList />
            <div className="mt-[13px] flex h-[48px] items-center">
              <div className="flex h-[46px] w-[47px] items-center justify-center rounded-[5px] border-2 border-[#b0b0b0] bg-[#dfdfdf]">
                <svg width="28" height="28" viewBox="0 0 28 28"><path d="M1 1h26v26H1z" fill="#fff" stroke={BLUE} strokeWidth="1.500" /><path d="M3.500 4h5.500v5H3.500zM11.200 4h5.500v5h-5.500zM19 4h5.500v5H19zM3.500 11.500h5.500v5H3.500zM11.200 11.500h5.500v5h-5.500zM19 11.500h5.500v5H19zM3.500 19h5.500v5H3.500zM11.200 19h5.500v5h-5.500zM19 19h5.500v5H19z" fill={BLUE} /></svg>
              </div>
              <span className="ml-[9px] flex"><TableIcon s={32} /></span>
              <div className="ml-[220px] flex h-[48px] w-[194px] items-center justify-center rounded-[5px] border-2 border-[#b3b3b3] bg-gradient-to-b from-white to-[#f1f1f1]"><Txt tone="text-black">Save Symbol...</Txt></div>
              <div className="ml-[12px] flex h-[48px] w-[160px] items-center justify-center gap-[9px] rounded-[5px] border-2 border-[#b3b3b3] bg-gradient-to-b from-white to-[#f1f1f1]"><Txt tone="text-black">Advanced</Txt><Down w={12} /></div>
            </div>
          </div>
          <div className="mt-[59px] flex h-[38px] items-center pl-[6px]">
            <svg width="21" height="15" viewBox="0 0 21 15"><path d="M1 1h19L10.500 14z" fill="#444" stroke="#111" strokeWidth="1.500" /></svg>
            <span className="ml-[17px] flex"><Heading>Layer Rendering</Heading></span>
          </div>
          <div className="mt-[3px] ml-[2px] flex h-[304px] w-[726px] flex-col border-2 border-[#dcdcdc] bg-[#f2f2f2] pt-[23px] pl-[2px]">
            <div className="flex h-[43px] items-center">
              <Txt cls="w-[196px]">Opacity</Txt><Slider w="w-[306px]" /><Spin cls="ml-[8px] h-[43px] w-[200px]" value="100.0 %" upDim />
            </div>
            <div className="mt-[18px] flex h-[78px] items-center">
              <Txt cls="w-[194px]">Blending mode</Txt>
              <div className="flex w-[257px] flex-col"><span className="flex h-[31px] items-end"><span className="text-[25px] leading-[32px] tracking-[-0.2px] text-[#262626]">Layer</span></span><Combo cls="h-[47px] w-[257px]" label="Normal" pl="pl-[9px]" /></div>
              <div className="ml-[4px] flex w-[254px] flex-col"><span className="flex h-[31px] items-end"><span className="text-[25px] leading-[32px] tracking-[-0.2px] text-[#262626]">Feature</span></span><Combo cls="h-[47px] w-[254px]" label="Normal" pl="pl-[8px]" /></div>
            </div>
            <div className="mt-[12px] flex h-[45px] items-center pr-[11px]"><Check /><Txt cls="mr-auto ml-[10px]">Draw effects</Txt>
              <Btn dim><svg width="30" height="30" viewBox="0 0 30 30"><path d="M14 1l4 9 9 .5-7 6 3 9.500-9-5-8.500 5 2.500-9.500-7-6L10 10z" fill="#dcd8c8" /><path d="M24 20l5-5-2 14M17 28l5-5-1 6z" fill="#c4c8cb" /></svg></Btn>
            </div>
            <div className="mt-[14px] flex h-[45px] items-center pr-[11px]"><Check /><Txt cls="mr-auto ml-[10px]">Control feature rendering order</Txt>
              <Btn dim><svg width="32" height="32" viewBox="0 0 32 32"><text x="1" y="14" fontSize="16" fontWeight="700" fill="#e0cdcd" className="font-['Open_Sans']">A</text><text x="1" y="30" fontSize="16" fontWeight="700" fill="#c3cdd6" className="font-['Open_Sans']">Z</text><path d="M21 3h3v16h6l-7.500 10L15 19h6z" fill="#c8cdd1" /></svg></Btn>
            </div>
          </div>
          <div className="mt-[12px] flex h-[47px] items-center">
            <Btn><UndoArrow s={32} color="#e8803a" edge="#b0541a" /></Btn>
            <span className="ml-[13px] flex"><Btn><UndoArrow s={32} flip color="#8cc08c" edge="#5a905a" /></Btn></span>
            <span className="ml-[257px] flex"><Check on /></span>
            <Txt cls="ml-[10px]">Live update</Txt>
            <div className="ml-auto flex h-[47px] w-[160px] items-center justify-center rounded-[5px] border-2 border-[#cdcdcd] bg-[#f9f9f9]"><Txt tone="text-[#9a9a9a]">Apply</Txt></div>
          </div>
        </div>
      </div>
    </section>
  );
}

/* ------------------------------------------------------------------ */
/* Status bar                                                          */
/* ------------------------------------------------------------------ */

function StatusBar() {
  return (
    <footer className="flex h-[61px] items-center pt-[2px] pl-[8px] text-[22px] text-black">
      <div className="flex h-[47px] w-[427px] shrink-0 items-center rounded-[6px] border-2 border-[#b3b3b3] bg-white pl-[17px]">
        <Magnify /><span className="ml-[13px] text-[26px] tracking-[-0.2px] text-[#8a8a8a]">Type to locate (⌘K)</span>
      </div>
      <span className="ml-[16px] w-[1262px] shrink-0 whitespace-nowrap tracking-[0.180px]">Toggles the editing state of the current layer</span>
      <span className="flex w-[107px] shrink-0 justify-end overflow-hidden whitespace-nowrap text-[#262626]">Coordinate</span>
      <div className="ml-[5px] flex h-[44px] w-[225px] shrink-0 items-center justify-center rounded-[6px] border-2 border-[#b3b3b3] bg-white pr-[4px] tracking-[0.600px] text-[#262626]">442943,2929999</div>
      <svg width="32" height="34" viewBox="0 0 32 34" fill="none" className="ml-[9px] shrink-0"><path d="M4 5c2-4 7-4 9-1l5 11c-2 3-7 4-9 2L4 9z" fill="#fff" stroke="#000" strokeWidth="2.600" /><path d="M8 4l5 13M12 4l2 6" stroke="#000" strokeWidth="2.600" /><path d="M10 21c0-8 11-11 15-4s2 15-5 15-10-5-10-11z" fill="#ddd" stroke="#000" strokeWidth="2.600" /><circle cx="18.500" cy="25" r="3" stroke="#000" strokeWidth="2" /><path d="M22 8l2-2M27 4l2-2M27 9l3-1M1 21l3 2" stroke="#000" strokeWidth="2.300" /></svg>
      <span className="ml-[26px] w-[64px] shrink-0">Scale</span>
      <div className="flex h-[47px] w-[184px] shrink-0 items-center rounded-[6px] border-2 border-[#b3b3b3] bg-white pl-[6px] text-[#262626]">1:2141017<div className="ml-auto flex h-[43px] w-[40px] items-center justify-center border-l-2 border-[#c9c9c9] bg-[#fafafa]"><Down /></div></div>
      <svg width="24" height="30" viewBox="0 0 24 30" fill="none" className="ml-[25px] shrink-0"><path d="M5 15V8c0-8 14-8 14 0v7" stroke="#8a8a8a" strokeWidth="3" /><rect x="0" y="14" width="24" height="16" rx="2" fill="#666" /></svg>
      <span className="ml-[19px] w-[106px] shrink-0">Magnifier</span>
      <Spin cls="h-[45px] w-[185px]" value="100%" small />
      <span className="ml-[19px] w-[106px] shrink-0 text-[#262626]">Rotation</span>
      <Spin cls="h-[44px] w-[185px]" value="0.0 °" small />
      <span className="ml-[14px] flex"><Check on /></span>
      <span className="ml-[9px] w-[107px] shrink-0 text-[#262626]">Render</span>
      <svg width="31" height="28" viewBox="0 0 31 28" fill="none" className="shrink-0"><path d="M8 1h15l7 12H1z" fill="#777" /><circle cx="15.500" cy="14" r="12.500" stroke="#777" strokeWidth="2" /><ellipse cx="15.500" cy="14" rx="6" ry="12.500" stroke="#777" strokeWidth="1.800" /><path d="M1 13.500h29M4 20h23M15.500 1v26" stroke="#777" strokeWidth="1.800" /><path d="M10 2l-3 10M21 2l3 10M5 8h21M15.500 2v10" stroke="#ddd" strokeWidth="1.200" /></svg>
      <span className="ml-[4px] w-[182px] shrink-0 tracking-[0.050px]">EPSG:32646</span>
      <svg width="33" height="31" viewBox="0 0 33 31" className="shrink-0"><path d="M16.500 0C26 0 33 5.500 33 13c0 4-1.500 7-4.500 9.500.3 3 1 5.500 3 8-4 0-7.500-2-9.500-4.800C9 28 0 22 0 13 0 5.500 7 0 16.500 0z" fill="#666" /><circle cx="8.500" cy="13" r="2.300" fill="#fff" /><circle cx="16.500" cy="13" r="2.300" fill="#fff" /><circle cx="24.500" cy="13" r="2.300" fill="#fff" /></svg>
    </footer>
  );
}

const Dots = ({ vertical }: { vertical?: boolean }) => (
  <div className={vertical ? "flex flex-col gap-[4px]" : "flex gap-[4px]"}>
    {Array.from({ length: 6 }, (_, i) => <span key={i} className="h-[2px] w-[2px] bg-[#bdbdbd]" />)}
  </div>
);

export default function App() {
  return (
    <div className="h-[2382px] w-[3680px] overflow-hidden bg-white pt-[74px] pl-[111px] font-['Inter',sans-serif]">
      <div className="flex h-[2162px] w-[3460px] flex-col overflow-hidden rounded-[22px] border-2 border-[#444242] bg-[#f6f6f6] shadow-[0_44px_90px_rgba(0,0,0,0.4)]">
        <div className="flex h-[56px] shrink-0 items-center bg-[#fdfdfd] pl-[15px]">
          <div className="flex gap-[16px]">
            <span className="h-[24px] w-[24px] rounded-full border border-[#b8261c] bg-[#da2d22]" />
            <span className="h-[24px] w-[24px] rounded-full border border-[#7c5214] bg-[#966b20]" />
            <span className="h-[24px] w-[24px] rounded-full border border-[#2a6a18] bg-[#3a8a25]" />
          </div>
          <h1 className="flex-1 pr-[125px] pb-px text-center text-[26px] font-bold tracking-[0.050px] text-[#3c3c3c]">*OverlayAnalysis — QGIS [Earthsys 2025]</h1>
        </div>
        <div className="h-[2px] shrink-0 bg-black" />
        <Toolbars />
        <div className="flex h-[1810px] shrink-0">
          <MapTools />
          <div className="ml-[3px] flex w-[753px] shrink-0 flex-col">
            <BrowserDock />
            <div className="mt-[6px] mb-[-8px] flex justify-center"><Dots /></div>
            <LayersDock />
          </div>
          <div className="flex w-[13px] shrink-0 items-center justify-center pb-[6px]"><Dots vertical /></div>
          <div className="mt-[2px] w-[1751px] shrink-0 border border-[#c4c4c4] bg-white pt-[336px] pl-[41px]"><MapCanvas /></div>
          <StylingDock />
        </div>
        <StatusBar />
      </div>
    </div>
  );
}
